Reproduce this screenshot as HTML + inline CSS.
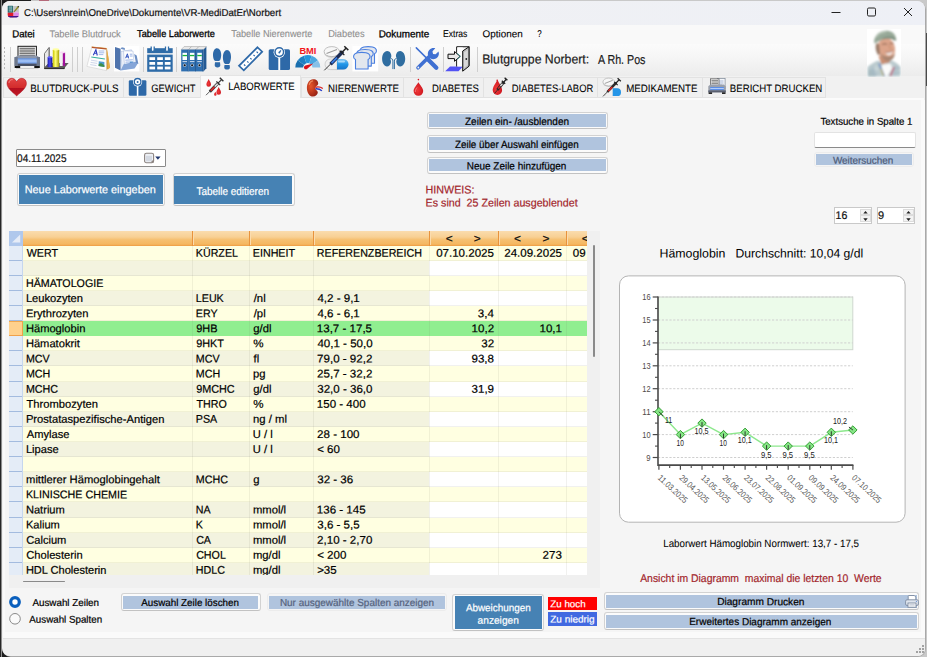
<!DOCTYPE html>
<html lang="de"><head><meta charset="utf-8"><title>VR-MediDatEr</title>
<style>
html,body{margin:0;padding:0;}
body{width:927px;height:657px;overflow:hidden;position:relative;background:#c9c9c9;font-family:"Liberation Sans",sans-serif;}
div,span,svg{position:absolute;}
span{white-space:pre;transform-origin:0 50%;-webkit-text-stroke:0.2px currentColor;}
#bgL{left:0;top:0;width:31px;height:657px;background:linear-gradient(90deg,#262626 0,#262626 1px,#8d8d8d 1px,#8d8d8d 2px,#1d1d1d 2px);}
#win{left:2px;top:1px;width:923.4px;height:654.6px;box-shadow:0.6px 0.6px 0 0.4px #a9a9a9;background:#f0f0f0;border-radius:8px;overflow:hidden;}
svg text{font-family:"Liberation Sans",sans-serif;}
</style></head><body>
<div id="bgL"></div>
<div style="left:926px;top:33px;width:1px;height:53px;background:#4a4a4a;"></div>
<div style="left:39px;top:0px;width:9.5px;height:1px;background:#b4697a;"></div>
<div style="left:203px;top:656px;width:100px;height:1px;background:repeating-linear-gradient(90deg,#8a8a8a 0 2px,#c4c4c4 2px 5px);"></div>
<div id="win">
<div style="left:0px;top:0px;width:924px;height:24px;background:linear-gradient(90deg,#f1f1f2,#eef0f6);"></div>
<div style="left:0px;top:24px;width:924px;height:19px;background:#f9f9f9;"></div>
<div style="left:0px;top:43px;width:924px;height:32px;background:linear-gradient(#fbfbfb,#f6f6f6 40%,#ececec);"></div>
<div style="left:0px;top:75px;width:924px;height:23px;background:#f1f1f1;"></div>
</div>
<svg style="left:7px;top:5px" width="13" height="13.5" viewBox="0 0 15 15.5"><rect x="0.8" y="0.8" width="6.4" height="8.2" rx="0.8" fill="#2c6a70"/><path d="M2 2.5h4M2 4.5h4M2 6.5h4M3.4 1.5v6.5M5 1.5v6.5" stroke="#9fd0d0" stroke-width="0.6"/><path d="M7.6 1h6v8h-6z" fill="#c4c4c4"/><path d="M8 8.2L13.4 1.4" stroke="#8f8a22" stroke-width="1.5"/><path d="M12 1l2 .2-.3 2z" fill="#3a3a3a"/><path d="M0.8 9h6.8v5.2H3.6a2.8 2.8 0 0 1-2.8-2.8z" fill="#e01b2b"/><path d="M7.6 9h6.2v2.4a2.8 2.8 0 0 1-2.8 2.8H7.6z" fill="#dd8ee6"/><path d="M8 9c.5-2 4.500-2 5.400 0z" fill="#e7a8ee"/><path d="M1.1 12.600h12.400a2.800 2.800 0 0 1-2.500 1.700H3.600a2.800 2.800 0 0 1-2.500-1.700z" fill="#43168a"/></svg>
<span style="left:24px;top:7px;font-size:10px;line-height:10px;color:#111;transform:translate(0.01px,0.99px) rotate(.03deg) scaleX(0.9657);">C:\Users\nrein\OneDrive\Dokumente\VR-MediDatEr\Norbert</span>
<svg style="left:825px;top:2px" width="100" height="22" viewBox="825 2 100 22"><path d="M831.5 12.5h9" stroke="#222" stroke-width="1" fill="none"/><rect x="867.5" y="8" width="8" height="8" rx="1.3" fill="none" stroke="#222" stroke-width="1"/><path d="M904 8l8 8M912 8l-8 8" stroke="#222" stroke-width="1" fill="none"/></svg>
<span style="left:12px;top:29px;font-size:10px;line-height:10px;color:#000;transform:translate(0.21px,0.19px) rotate(.03deg) scaleX(0.9611);-webkit-text-stroke:0.3px #000;">Datei</span>
<span style="left:49px;top:29px;font-size:10px;line-height:10px;color:#8e8e8e;transform:translate(0.49px,0.19px) rotate(.03deg) scaleX(0.9357);-webkit-text-stroke:0.1px;">Tabelle Blutdruck</span>
<span style="left:137px;top:29px;font-size:10px;line-height:10px;color:#000;transform:translate(0.09px,0.19px) rotate(.03deg) scaleX(0.9207);-webkit-text-stroke:0.3px #000;">Tabelle Laborwerte</span>
<span style="left:231px;top:29px;font-size:10px;line-height:10px;color:#8e8e8e;transform:translate(0.29px,0.19px) rotate(.03deg) scaleX(0.9176);-webkit-text-stroke:0.1px;">Tabelle Nierenwerte</span>
<span style="left:328px;top:29px;font-size:10px;line-height:10px;color:#8e8e8e;transform:translate(0.14px,0.19px) rotate(.03deg) scaleX(0.9246);-webkit-text-stroke:0.1px;">Diabetes</span>
<span style="left:378px;top:29px;font-size:10px;line-height:10px;color:#000;transform:translate(0.69px,0.19px) rotate(.03deg) scaleX(0.9865);-webkit-text-stroke:0.3px #000;">Dokumente</span>
<span style="left:443px;top:29px;font-size:10px;line-height:10px;color:#000;transform:translate(0.10px,0.19px) rotate(.03deg) scaleX(0.8579);-webkit-text-stroke:0.1px;">Extras</span>
<span style="left:482px;top:29px;font-size:10px;line-height:10px;color:#000;transform:translate(0.53px,0.19px) rotate(.03deg) scaleX(0.9883);-webkit-text-stroke:0.1px;">Optionen</span>
<span style="left:537px;top:29px;font-size:10px;line-height:10px;color:#000;transform:translate(0.27px,0.19px) rotate(.03deg) scaleX(0.7949);-webkit-text-stroke:0.1px;">?</span>
<div style="left:3.5px;top:47px;width:1.4px;height:1.6px;background:#b8b8b8;"></div>
<div style="left:3.5px;top:51px;width:1.4px;height:1.6px;background:#b8b8b8;"></div>
<div style="left:3.5px;top:55px;width:1.4px;height:1.6px;background:#b8b8b8;"></div>
<div style="left:3.5px;top:59px;width:1.4px;height:1.6px;background:#b8b8b8;"></div>
<div style="left:3.5px;top:63px;width:1.4px;height:1.6px;background:#b8b8b8;"></div>
<div style="left:3.5px;top:67px;width:1.4px;height:1.6px;background:#b8b8b8;"></div>
<div style="left:9.5px;top:46.5px;width:1px;height:25px;background:#cfcfcf;"></div>
<div style="left:72px;top:46.5px;width:1px;height:25px;background:#cfcfcf;"></div>
<div style="left:76.5px;top:46.5px;width:1px;height:25px;background:#cfcfcf;"></div>
<div style="left:81.5px;top:46.5px;width:1px;height:25px;background:#cfcfcf;"></div>
<div style="left:142.5px;top:46.5px;width:1px;height:25px;background:#cfcfcf;"></div>
<div style="left:176.1px;top:46.5px;width:1px;height:25px;background:#cfcfcf;"></div>
<div style="left:410px;top:46.5px;width:1px;height:25px;background:#cfcfcf;"></div>
<div style="left:443.2px;top:46.5px;width:1px;height:25px;background:#cfcfcf;"></div>
<div style="left:477px;top:46.5px;width:1px;height:25px;background:#cfcfcf;"></div>
<svg style="left:0;top:43px" width="927" height="33" viewBox="0 43 927 33">
<defs><linearGradient id="gpb" x1="0" y1="0" x2="0" y2="1"><stop offset="0" stop-color="#5f8fe0"/><stop offset=".5" stop-color="#a9c8f8"/><stop offset="1" stop-color="#5f8fe0"/></linearGradient><linearGradient id="gyl" x1="0" y1="0" x2="1" y2="0"><stop offset="0" stop-color="#c9c400"/><stop offset=".45" stop-color="#ffff7a"/><stop offset="1" stop-color="#a8a000"/></linearGradient><linearGradient id="gbl" x1="0" y1="0" x2="1" y2="0"><stop offset="0" stop-color="#1b1bb0"/><stop offset=".5" stop-color="#4a4af0"/><stop offset="1" stop-color="#101080"/></linearGradient><linearGradient id="gcap" x1="0" y1="0" x2="0" y2="1"><stop offset="0" stop-color="#7cc4f4"/><stop offset=".5" stop-color="#2196e8"/><stop offset="1" stop-color="#1873c8"/></linearGradient></defs>
<g>
<rect x="18" y="46.300" width="18.400" height="10.500" fill="#f4f4f4" stroke="#1a1a1a" stroke-width="1"/>
<path d="M19.500 48.3h15.400" stroke="#5a5a5a" stroke-width="1"/>
<path d="M19.500 50.1h15.400" stroke="#5a5a5a" stroke-width="1"/>
<path d="M19.500 51.9h15.400" stroke="#5a5a5a" stroke-width="1"/>
<path d="M19.500 53.7h15.400" stroke="#5a5a5a" stroke-width="1"/>
<path d="M19.500 55.4h15.400" stroke="#5a5a5a" stroke-width="1"/>
<path d="M14.500 57.500l3.500-2h18.400l3.500 2v8.500h-25.400z" fill="#8d97ab"/>
<rect x="14.500" y="57" width="3.300" height="9" fill="#6e788c"/><rect x="36.700" y="57" width="3.300" height="9" fill="#6e788c"/>
<rect x="17.800" y="58.300" width="18.900" height="5.400" fill="url(#gpb)"/>
<rect x="17.800" y="63.700" width="18.900" height="2.300" fill="#4a5266"/>
<rect x="14.700" y="66" width="5.500" height="2" fill="#111"/><rect x="34.300" y="66" width="5.500" height="2" fill="#111"/>
<rect x="16" y="68" width="22.500" height="1" fill="#bdbdbd" opacity=".7"/>
</g>
<g>
<path d="M44.500 53.500L49 47.500v15.500l-4.500 5.500z" fill="#e9e9e9" stroke="#555" stroke-width="0.8"/>
<path d="M49 47.500h0.800v15H49z" fill="#777"/>
<path d="M44.300 67.500l4.500-4.500h19.800l-4.500 5.500H44.300z" fill="#5c5c5c"/>
<path d="M44.300 68.600h20l0-1" stroke="#222" stroke-width="1" fill="none"/>
<rect x="47.600" y="57.200" width="4.800" height="10" fill="url(#gbl)"/><ellipse cx="50" cy="57.200" rx="2.400" ry="0.900" fill="#5a5aff"/>
<rect x="52.800" y="49.300" width="6.400" height="17.600" rx="1" fill="url(#gyl)"/><ellipse cx="56" cy="49.400" rx="3.200" ry="1.100" fill="#ffffa0"/>
<rect x="59.800" y="52.400" width="3" height="13.600" fill="#f2f2f2"/><rect x="62.800" y="52.400" width="2.300" height="13.600" fill="#a0109a"/><ellipse cx="62.400" cy="52.400" rx="2.600" ry="0.900" fill="#f7d7f5"/>
</g>
<g>
<path d="M91.500 46.600l15.200 1.500 3.300 19.500-4 2.600z" fill="#d9962e"/>
<path d="M107 48l3 19.700-2.200 1.800z" fill="#e8b04a"/>
<path d="M91.800 47.300l14.400 1.600 0.300 21.700-19.600-4.200z" fill="#fdfdfd" stroke="#c9c9c9" stroke-width="0.500"/>
<path d="M91.800 47.300l14.400 1.600" stroke="#b8552a" stroke-width="1.200"/>
<path d="M93.300 55.200l2.600-5.600 1.400 5.900M93.900 53.300h3.200" stroke="#2c3fc0" stroke-width="1.100" fill="none"/>
<path d="M98.800 51h5.500M98.800 52.800h5.500M98.800 54.600h4.500" stroke="#9bb4e8" stroke-width="0.900"/>
<path d="M91.300 57l13.600 2" stroke="#35b09a" stroke-width="1.200"/>
<path d="M91 60.200l6.500 1M90.600 62.400l6.500 1M90.200 64.600l6.300 1" stroke="#c3cde6" stroke-width="0.800"/>
<path d="M98.800 61.200l5.600 0.900 0 4.800-5.800-1z" fill="#4d9ad0"/><path d="M98.700 64.300l2.300-1.200 3.400 2.200v1.600l-5.800-1z" fill="#3f8f4a"/>
</g>
<g>
<rect x="114" y="46" width="25.400" height="25.400" fill="#fff"/>
<path d="M115 47l5.600 1.700V70.600L115 67.800z" fill="#4f74ad"/>
<path d="M120.600 48.700l1.200-1.500 3 .7v2z" fill="#6d8fc4"/>
<path d="M121 51.500l10.500-1.700 2 17.700-11.500 2z" fill="#eef2fa" stroke="#9fb3d8" stroke-width="0.500"/>
<path d="M123.500 50.800l9.500 0.300 1.500 16.500-9.800 1.300z" fill="#ffffff" stroke="#9fb3d8" stroke-width="0.500"/>
<path d="M125.600 58.200l1.800-4.400 1.200 4.600M126 56.800h2.500" stroke="#3355c0" stroke-width="1" fill="none"/>
<path d="M129.800 54.200h2.600M129.900 56h2.700M125.400 60.200l7.400-.4M125.500 62.200l4-.2" stroke="#7f9fe0" stroke-width="0.800"/>
<path d="M129.600 61.600l3.600-.2.300 3.600-3.700.3z" fill="#4d8fd0"/>
<path d="M120.600 70.600l3.200-6.500 12-2.300 2.400 1-3.600 5.800z" fill="#86a6d8"/>
<path d="M134.200 54l2.500 1.500 1.700 8.400-2.500-1.200z" fill="#6d8fc4"/>
</g>
<g>
<rect x="147.200" y="48.200" width="25.500" height="5" fill="#2e6ca8"/>
<rect x="147.200" y="54.600" width="25.500" height="17.200" fill="#2e6ca8"/>
<path d="M151.2 46.400v3.600a1.500 1.500 0 0 0 3 0v-3.600" fill="#fff" stroke="#2e6ca8" stroke-width="1.300"/>
<path d="M165.5 46.400v3.600a1.500 1.500 0 0 0 3 0v-3.600" fill="#fff" stroke="#2e6ca8" stroke-width="1.300"/>
<rect x="149.4" y="57.2" width="5.700" height="2.800" fill="#fff"/>
<rect x="149.4" y="62" width="5.700" height="2.800" fill="#fff"/>
<rect x="149.4" y="66.6" width="5.700" height="2.800" fill="#fff"/>
<rect x="157.2" y="57.2" width="5.700" height="2.800" fill="#fff"/>
<rect x="157.2" y="62" width="5.700" height="2.800" fill="#fff"/>
<rect x="157.2" y="66.6" width="5.700" height="2.800" fill="#fff"/>
<rect x="164.8" y="57.2" width="5.700" height="2.800" fill="#fff"/>
<rect x="164.8" y="62" width="5.700" height="2.800" fill="#fff"/>
<rect x="164.8" y="66.6" width="5.700" height="2.800" fill="#fff"/>
</g>
<g>
<path d="M203.400 49.600l3-3v21.600l-3 3.200z" fill="#245a94"/>
<path d="M181.2 49.600l3-3.100h7.300l-3 3.100z" fill="#e8e8e8" stroke="#8a8a8a" stroke-width="0.400"/>
<rect x="181.2" y="49.600" width="7.300" height="21.800" fill="#2f6fb0"/>
<rect x="187.8" y="49.600" width="0.700" height="21.800" fill="#1f4d80"/>
<rect x="182.5" y="52.800" width="4.500" height="7.200" fill="#fff"/>
<rect x="182.5" y="54.900" width="4.500" height="1.300" fill="#17b53a"/>
<rect x="182.5" y="61.200" width="4.500" height="0.900" fill="#dfe8f4"/>
<circle cx="184.7" cy="65.200" r="1.600" fill="#c9d6e8"/><circle cx="184.7" cy="65.200" r="1.050" fill="#111"/>
<path d="M188.6 49.600l3-3.100h7.300l-3 3.100z" fill="#e8e8e8" stroke="#8a8a8a" stroke-width="0.400"/>
<rect x="188.6" y="49.600" width="7.300" height="21.800" fill="#2f6fb0"/>
<rect x="195.20000000000002" y="49.600" width="0.700" height="21.800" fill="#1f4d80"/>
<rect x="189.9" y="52.800" width="4.500" height="7.200" fill="#fff"/>
<rect x="189.9" y="54.900" width="4.500" height="1.300" fill="#17b53a"/>
<rect x="189.9" y="61.200" width="4.500" height="0.900" fill="#dfe8f4"/>
<circle cx="192.1" cy="65.200" r="1.600" fill="#c9d6e8"/><circle cx="192.1" cy="65.200" r="1.050" fill="#111"/>
<path d="M196 49.600l3-3.100h7.300l-3 3.100z" fill="#e8e8e8" stroke="#8a8a8a" stroke-width="0.400"/>
<rect x="196" y="49.600" width="7.300" height="21.800" fill="#2f6fb0"/>
<rect x="202.60000000000002" y="49.600" width="0.700" height="21.800" fill="#1f4d80"/>
<rect x="197.3" y="52.800" width="4.500" height="7.200" fill="#fff"/>
<rect x="197.3" y="54.900" width="4.500" height="1.300" fill="#17b53a"/>
<rect x="197.3" y="61.200" width="4.500" height="0.900" fill="#dfe8f4"/>
<circle cx="199.5" cy="65.200" r="1.600" fill="#c9d6e8"/><circle cx="199.5" cy="65.200" r="1.050" fill="#111"/>
</g>
<g>
<path d="M217 48.200c2.600 0 4.300 3 4.200 6.800-.1 3-1 6-2.400 6h-3.300c-1.500 0-2.600-3.500-2.500-6.500.100-3.600 1.700-6.300 4-6.300z" fill="#2e69a8"/>
<path d="M215 62.300h5l.3 2.600c.2 1.600-1 2.500-2.800 2.500s-2.900-1-2.800-2.500z" fill="#2e69a8"/>
<path d="M227 49.900c2.500 0 4.100 3 4 7.200-.1 3.100-1 6.800-2.300 6.800h-3.300c-1.400 0-2.600-3.800-2.500-7 .1-4 1.800-7 4.100-7z" fill="#2e69a8"/>
<path d="M224.500 65h5.100l.3 2.300c.2 1.500-1 2.300-2.800 2.300s-3-.9-2.900-2.300z" fill="#2e69a8"/>
</g>
<g>
<path d="M257.500 47.300l4.700 4.400L243.800 70.300l-4.800-4.500z" fill="#fff" stroke="#2e69a8" stroke-width="1.700" stroke-linejoin="miter"/>
<path d="M245.3 65.8l-1.300-1.300" stroke="#2e69a8" stroke-width="1.200"/>
<path d="M248.5 62.6l-1.300-1.300" stroke="#2e69a8" stroke-width="1.200"/>
<path d="M251.6 59.4l-1.300-1.300" stroke="#2e69a8" stroke-width="1.200"/>
<path d="M254.8 56.2l-1.300-1.300" stroke="#2e69a8" stroke-width="1.200"/>
<path d="M257.9 53.0l-1.300-1.300" stroke="#2e69a8" stroke-width="1.200"/>
</g>
<g>
<rect x="268.700" y="49.200" width="21.300" height="20.800" rx="1.600" fill="#2e69a8"/>
<rect x="278.300" y="56" width="1.900" height="14.200" fill="#fff"/>
<circle cx="279.300" cy="52.300" r="5.700" fill="#fff"/>
<circle cx="279.300" cy="52.100" r="4.300" fill="#fff" stroke="#2e69a8" stroke-width="1.500"/>
<path d="M279.300 52.600l1.600-2.200" stroke="#2e69a8" stroke-width="1.300"/><circle cx="279.300" cy="52.500" r="0.900" fill="#2e69a8"/>
</g>
<g>
<text x="307.900" y="53.900" font-size="8.300" font-weight="bold" fill="#f2161c" text-anchor="middle" textLength="17" lengthAdjust="spacingAndGlyphs">BMI</text>
<path d="M295.30 67.60A12.5 12.5 0 0 1 297.69 60.25L304.08 64.90A4.6 4.6 0 0 0 303.20 67.60Z" fill="#1a6fae"/>
<path d="M297.69 60.25A12.5 12.5 0 0 1 303.94 55.71L306.38 63.23A4.6 4.6 0 0 0 304.08 64.90Z" fill="#1f80c4"/>
<path d="M303.94 55.71A12.5 12.5 0 0 1 311.66 55.71L309.22 63.23A4.6 4.6 0 0 0 306.38 63.23Z" fill="#2596dc"/>
<path d="M311.66 55.71A12.5 12.5 0 0 1 317.91 60.25L311.52 64.90A4.6 4.6 0 0 0 309.22 63.23Z" fill="#4aa6e0"/>
<path d="M317.91 60.25A12.5 12.5 0 0 1 320.30 67.60L312.40 67.60A4.6 4.6 0 0 0 311.52 64.90Z" fill="#86c0e8"/>
<path d="M313.300 63.400l-7.900 2.200a1.900 1.900 0 1 0 1.900 3.100z" fill="#d8121c"/>
</g>
<g>
<ellipse cx="331.800" cy="52.900" rx="7.700" ry="5" fill="#cfcfcf"/>
<ellipse cx="331.800" cy="51.600" rx="7.700" ry="5" fill="#f7f7f7" stroke="#a8a8a8" stroke-width="0.700"/>
<path d="M326.500 53.600l10.500-4.200" stroke="#9a9a9a" stroke-width="1.100"/>
<rect x="325" y="59" width="23.500" height="10.600" rx="5.300" fill="#d4d4d4"/>
<path d="M330.300 59h6.800v10.600h-6.800a5.300 5.300 0 0 1 0-10.600z" fill="#f0f0f0" stroke="#b5b5b5" stroke-width="0.500"/>
<path d="M337 59h6.200a5.300 5.300 0 0 1 0 10.600H337z" fill="url(#gcap)"/>
<rect x="338" y="60.500" width="7" height="2" rx="1" fill="#bfe3fb" opacity=".8"/>
<path d="M324.300 70.300L331 63.600" stroke="#222" stroke-width="0.900"/>
<path d="M330.500 64.200L343 51.500" stroke="#1c2b55" stroke-width="3.400" stroke-linecap="butt"/>
<path d="M331.600 63L337 57.600" stroke="#3a7be0" stroke-width="1.800"/>
<path d="M342.200 52.200l4-4.200" stroke="#222" stroke-width="1.400"/>
<path d="M344.300 46.300l4 3.800" stroke="#222" stroke-width="1.500"/>
<path d="M339.800 50.700l4.600 4.400" stroke="#222" stroke-width="1.300"/>
</g>
<g>
<rect x="352.400" y="46" width="25.800" height="25.400" fill="#fff"/>
<path d="M361.9 63.2v-9.500c-2.300-.8-2.600-4 -.6-5.600 1.500-1.200 3.500-1.500 6.900-1.500s5.400.3 6.900 1.500c2 1.600 1.700 4.800-.6 5.600v9.500z" fill="#e3e7ee" stroke="#4a7fe0" stroke-width="1.100" stroke-linejoin="round"/>
<path d="M358.7 66.1v-9.500c-2.300-.8-2.600-4 -.6-5.600 1.500-1.200 3.500-1.500 6.900-1.500s5.400.3 6.900 1.500c2 1.600 1.700 4.800-.6 5.600v9.500z" fill="#e3e7ee" stroke="#4a7fe0" stroke-width="1.100" stroke-linejoin="round"/>
<path d="M355.5 69v-9.500c-2.300-.8-2.600-4 -.6-5.600 1.500-1.200 3.500-1.500 6.900-1.500s5.400.3 6.900 1.500c2 1.600 1.700 4.800-.6 5.600v9.500z" fill="#e3e7ee" stroke="#4a7fe0" stroke-width="1.100" stroke-linejoin="round"/>
</g>
<g>
<path d="M387.200 51c2.800 0 4.300 3 4.100 5.400-.1 1.300-.9 1.800-.9 2.700s.8 1.600.6 3.100c-.3 2.600-2 4.200-4 4.200-2.900 0-4.900-3.700-4.900-7.700s2-7.700 5.100-7.700z" fill="#2f6da0"/>
<path d="M400.100 51c-2.800 0-4.300 3-4.100 5.400.1 1.300.9 1.800.9 2.700s-.8 1.600-.6 3.100c.3 2.600 2 4.200 4 4.200 2.900 0 4.900-3.700 4.900-7.700s-2-7.700-5.100-7.700z" fill="#2f6da0"/>
<path d="M390.600 58.600c1.700 0 2.300.8 2.300 2.500v8M396.700 58.600c-1.700 0-2.300.8-2.300 2.500v8" stroke="#2f6da0" stroke-width="1" fill="none"/>
</g>
<g>
<path d="M416.300 47.900l9.800 9.700" stroke="#3f70d2" stroke-width="1.500" stroke-linecap="round"/>
<path d="M427.300 58.700l9 9" stroke="#3f70d2" stroke-width="4.300" stroke-linecap="round"/>
<path d="M418 67.800L431.300 54.500" stroke="#3f70d2" stroke-width="3.600" stroke-linecap="round"/>
<path d="M435.300 48.300l-2.800 2.900.4 2.700 2.700.4 2.900-2.800c.9 2.300.3 4.500-1.200 6-1.900 1.900-4.700 2.200-6.900.9l-1.800-1.800c-1.300-2.200-1-5 .9-6.900 1.500-1.500 3.700-2.100 5.800-1.400z" fill="#3f70d2"/>
<circle cx="418.300" cy="67.500" r="0.900" fill="#f3f3f3"/>
</g>
<g>
<path d="M450 66.500h13l-4.500 4.700h-13.300z" fill="#5252f4"/>
<path d="M456.700 46.800h12.200v19" fill="none" stroke="#111" stroke-width="1.100"/>
<path d="M456.700 46.800v6M456.700 59.500v7" stroke="#111" stroke-width="1.100"/>
<rect x="457.300" y="47.400" width="5.500" height="19" fill="#fff"/>
<path d="M462.700 51l6.300-4.200v19.400l-6.300 5z" fill="#bdbdbd" stroke="#111" stroke-width="1"/>
<path d="M464 52.500l3.800-2.600v15.200l-3.800 3z" fill="#d9d9d9"/>
<circle cx="466.300" cy="59" r="0.900" fill="#222"/>
<path d="M448 54.200h6.500v-2.700l5.700 4.900-5.700 4.900v-2.700H448z" fill="#e9e9e9" stroke="#111" stroke-width="1" stroke-linejoin="miter"/>
<path d="M457.200 53.200l3.200 3.100-3.200 3.100" fill="none" stroke="#2a8a8a" stroke-width="0.800"/>
</g>
</svg>
<span style="left:482px;top:52px;font-size:13px;line-height:13px;color:#1a1a1a;transform:translate(0.19px,0.53px) rotate(.03deg) scaleX(0.9425);">Blutgruppe Norbert:</span>
<span style="left:597px;top:52px;font-size:13px;line-height:13px;color:#1a1a1a;transform:translate(0.98px,0.53px) rotate(.03deg) scaleX(0.8203);">A Rh. Pos</span>
<svg style="left:867px;top:29px" width="34" height="48" viewBox="0 0 34 48">
<defs><filter id="bl" x="-10%" y="-10%" width="120%" height="120%"><feGaussianBlur stdDeviation="0.95"/></filter><clipPath id="pc"><rect x="0" y="0" width="34" height="48"/></clipPath></defs>
<rect x="0" y="0" width="34" height="48" fill="#fff"/>
<g clip-path="url(#pc)" filter="url(#bl)">
<path d="M0.500 47.500V38c3-3 7-5 10.500-6.500l6 4 6.500-4.500c4 1.500 8 4 10 7v9.500z" fill="#b9c9cd"/>
<path d="M1 47.500v-7l6 1 2 6z" fill="#a9bcc0"/>
<path d="M3 41l7 1M2 44.500l8 1M26 40l7-1M27 44l6.500-.5M5 38l3 9M29 37l-1.500 10" stroke="#9fb6c4" stroke-width="0.900" fill="none"/>
<path d="M8.500 35l3.500 6-4 1zM25.500 33.500l-2.500 6.500 4 0.500z" fill="#c9d6d8"/>
<path d="M14.500 36l9-1.500 1.500 5-5 8h-3.500z" fill="#fbfbfb"/>
<path d="M12 34.500l5.500 13" stroke="#5b7fc0" stroke-width="1.400"/><path d="M14 40l2.500 7" stroke="#d8c040" stroke-width="1"/><path d="M27 38l-3.500 9" stroke="#c05070" stroke-width="1.500"/>
<path d="M11.500 27l3 8.500 8-2 1.500-6z" fill="#c98f74"/>
<ellipse cx="19.300" cy="19.800" rx="8.800" ry="10.800" fill="#dca48a" transform="rotate(-8 19.300 19.800)"/>
<path d="M9.500 14c-1.500 3-1 8 1.500 12l2-1-1-10z" fill="#9a7a68"/>
<path d="M13.500 24c1 5 4.500 8.500 8.500 8 3.500-.5 5.500-4 6-7.500-2.500 2.500-5 3.300-8 3-3-.3-5-1.500-6.500-3.500z" fill="#a98672"/>
<path d="M18.500 23.200c3 .6 5.500 0 7.500-1.700-.3 3-2 4.800-4.200 4.700-1.700-.1-2.800-1.400-3.300-3z" fill="#f6ece6"/>
<path d="M18.500 23.200c3 .6 5.500 0 7.500-1.700" stroke="#8a4a40" stroke-width="0.700" fill="none"/>
<path d="M15 15.500c2-1 3.500-1 5 0M22.500 14.800c1.500-.8 3-.8 4 0" stroke="#7a5545" stroke-width="1" fill="none"/>
<path d="M22 16c.8 2 .9 3.500 1.800 4.500" stroke="#c48868" stroke-width="1" fill="none"/>
<path d="M7.300 14.500c-1-6 3-11.500 10-12.500 6-.8 10.500 2 11.500 6.500.3 1.300-.2 2.500-.8 3.300-3-2.800-8-3-12.500-1.200-3 1.200-5.500 2.600-8.200 3.900z" fill="#96a897"/>
<path d="M9 8.500c2-3.500 6-5.500 10-5.600" stroke="#b3c2b3" stroke-width="1.500" fill="none"/>
<path d="M15.500 10.600c4.500-1.800 9.500-1.600 12.500 1.200l1.500-1.300c-2.500-3.500-9-3.800-14-1.300z" fill="#7b8d7d"/>
</g></svg>
<div style="left:3px;top:77px;width:120.7px;height:21px;background:#f0f0f0;border:1px solid #e2e2e2;box-sizing:border-box;"></div>
<span style="left:30px;top:82px;font-size:10.8px;line-height:10.8px;color:#000;transform:translate(0.20px,0.55px) rotate(.03deg) scaleX(0.9022);-webkit-text-stroke:0.08px;">BLUTDRUCK-PULS</span>
<div style="left:122.7px;top:77px;width:77.9px;height:21px;background:#f0f0f0;border:1px solid #e2e2e2;box-sizing:border-box;"></div>
<span style="left:151px;top:82px;font-size:10.8px;line-height:10.8px;color:#000;transform:translate(0.23px,0.55px) rotate(.03deg) scaleX(0.8685);-webkit-text-stroke:0.08px;">GEWICHT</span>
<div style="left:199.6px;top:75px;width:101.3px;height:24px;background:#fafafa;border:1px solid #e4e4e4;border-bottom:none;box-sizing:border-box;"></div>
<span style="left:228px;top:81px;font-size:10.8px;line-height:10.8px;color:#000;transform:translate(0.22px,0.15px) rotate(.03deg) scaleX(0.8834);-webkit-text-stroke:0.08px;">LABORWERTE</span>
<div style="left:300.9px;top:77px;width:103.1px;height:21px;background:#f0f0f0;border:1px solid #e2e2e2;box-sizing:border-box;"></div>
<span style="left:328px;top:82px;font-size:10.8px;line-height:10.8px;color:#000;transform:translate(0.11px,0.55px) rotate(.03deg) scaleX(0.8910);-webkit-text-stroke:0.08px;">NIERENWERTE</span>
<div style="left:403px;top:77px;width:80.7px;height:21px;background:#f0f0f0;border:1px solid #e2e2e2;box-sizing:border-box;"></div>
<span style="left:432px;top:82px;font-size:10.8px;line-height:10.8px;color:#000;transform:translate(0.02px,0.55px) rotate(.03deg) scaleX(0.8764);-webkit-text-stroke:0.08px;">DIABETES</span>
<div style="left:482.7px;top:77px;width:115.6px;height:21px;background:#f0f0f0;border:1px solid #e2e2e2;box-sizing:border-box;"></div>
<span style="left:511px;top:82px;font-size:10.8px;line-height:10.8px;color:#000;transform:translate(0.83px,0.55px) rotate(.03deg) scaleX(0.8695);-webkit-text-stroke:0.08px;">DIABETES-LABOR</span>
<div style="left:597.3px;top:77px;width:105.7px;height:21px;background:#f0f0f0;border:1px solid #e2e2e2;box-sizing:border-box;"></div>
<span style="left:626px;top:82px;font-size:10.8px;line-height:10.8px;color:#000;transform:translate(0.20px,0.55px) rotate(.03deg) scaleX(0.8991);-webkit-text-stroke:0.08px;">MEDIKAMENTE</span>
<div style="left:702px;top:77px;width:123.6px;height:21px;background:#f0f0f0;border:1px solid #e2e2e2;box-sizing:border-box;"></div>
<span style="left:729px;top:82px;font-size:10.8px;line-height:10.8px;color:#000;transform:translate(0.81px,0.55px) rotate(.03deg) scaleX(0.8928);-webkit-text-stroke:0.08px;">BERICHT DRUCKEN</span>
<svg style="left:0;top:74px" width="927" height="26" viewBox="0 74 927 26">
<defs><linearGradient id="ghe" x1="0" y1="0" x2="0" y2="1"><stop offset="0" stop-color="#e24545"/><stop offset=".55" stop-color="#d22b2b"/><stop offset=".56" stop-color="#b30f1f"/><stop offset="1" stop-color="#c21a26"/></linearGradient><radialGradient id="gdr" cx=".4" cy=".6" r=".7"><stop offset="0" stop-color="#f03a3a"/><stop offset="1" stop-color="#c8101a"/></radialGradient><radialGradient id="gki" cx=".35" cy=".4" r=".8"><stop offset="0" stop-color="#e8552a"/><stop offset="1" stop-color="#8a1a10"/></radialGradient></defs>
<path d="M16.700 81.800c1.300-2.600 3.300-3.600 5.200-3.500 2.700.1 4.600 2.300 4.500 5.300-.1 4.600-5.300 8.400-9.700 12.300C12.300 92 7.100 88.200 7 83.600c-.1-3 1.800-5.200 4.500-5.300 1.900-.1 3.900.9 5.200 3.500z" fill="url(#ghe)" stroke="#a80d1a" stroke-width="0.500"/>
<path d="M9 82.500c.3-2 1.700-3 3.200-2.900" stroke="#f08a8a" stroke-width="1" fill="none" stroke-linecap="round"/>
<rect x="128.800" y="80.300" width="17.600" height="15.500" rx="1.300" fill="#2e69a8"/>
<rect x="136.800" y="85" width="1.600" height="11" fill="#fff"/>
<circle cx="137.600" cy="82" r="4.600" fill="#fff"/>
<circle cx="137.600" cy="81.800" r="3.300" fill="#fff" stroke="#2e69a8" stroke-width="1.300"/><circle cx="137.600" cy="81.900" r="1" fill="#2e69a8"/>
<path d="M208.7 79.11000000000001c0.8049999999999999 2.07 2.3 3.4499999999999997 2.3 5.289999999999999a2.3 2.3 0 0 1 -4.6 0c0 -1.8399999999999999 1.4949999999999999 -3.2199999999999998 2.3 -5.289999999999999z" fill="url(#gdr)"/>
<path d="M218.7 87.11000000000001c0.8049999999999999 2.07 2.3 3.4499999999999997 2.3 5.289999999999999a2.3 2.3 0 0 1 -4.6 0c0 -1.8399999999999999 1.4949999999999999 -3.2199999999999998 2.3 -5.289999999999999z" fill="url(#gdr)"/>
<path d="M215.3 91.83999999999999c0.42 1.08 1.2 1.7999999999999998 1.2 2.76a1.2 1.2 0 0 1 -2.4 0c0 -0.96 0.78 -1.68 1.2 -2.76z" fill="url(#gdr)"/>
<path d="M206 95.200l4.200-4.200" stroke="#333" stroke-width="0.800"/>
<path d="M209.800 91.600l8.700-8.800" stroke="#3b3b3b" stroke-width="3" />
<path d="M210.800 90.600l3.700-3.700" stroke="#e02525" stroke-width="1.700"/>
<path d="M214.800 86.600l3-3" stroke="#d9d9d9" stroke-width="1.500"/>
<path d="M218 83.200l3.400-3.400" stroke="#333" stroke-width="1.200"/>
<path d="M219.800 77.800l3.600 3.500" stroke="#333" stroke-width="1.400"/>
<path d="M216.400 81.400l3.800 3.700" stroke="#333" stroke-width="1.200"/>
<path d="M313 79.2C316.2 79 318.4 81.2 318.2 83.8C318.1 85.6 315.5 86.2 315.3 87.9C315.1 89.6 317.9 90.4 317.8 92.6C317.7 95 315.5 96.5 313 96.5C309.5 96.5 306.9 92.7 306.9 87.9C306.9 83.1 309.5 79.4 313 79.2Z" fill="url(#gki)"/>
<path d="M309.3 84.5c.5-2 1.800-3.300 3.400-3.600" stroke="#f59a6a" stroke-width="1.100" fill="none" stroke-linecap="round" opacity=".8"/>
<path d="M315.4 87.300c2.700-.7 5.300-.3 7.400 1.200" stroke="#d81c1c" stroke-width="1.300" fill="none"/>
<path d="M315.4 88.800c2.700-.2 4.900.5 6.500 2.100" stroke="#2438c8" stroke-width="1.300" fill="none"/>
<circle cx="418.400" cy="79.600" r="0.800" fill="#d8121c"/>
<path d="M418.4 82.2C419.8 85 423.2 87.6 423.2 91A4.8 4.8 0 0 1 413.6 91C413.6 87.6 417 85 418.4 82.2Z" fill="url(#gdr)"/>
<path d="M415.300 91.500c0-1.500.8-2.600 1.500-3.600" stroke="#f58a8a" stroke-width="0.900" fill="none" stroke-linecap="round"/>
<circle cx="497.100" cy="80.300" r="0.700" fill="#d8121c"/>
<path d="M497.4 79.39c1.645 4.23 4.7 7.050000000000001 4.7 10.809999999999999a4.7 4.7 0 0 1 -9.4 0c0 -3.7600000000000002 3.055 -6.58 4.7 -10.809999999999999z" fill="url(#gdr)"/>
<path d="M494.600 93.400l3.600-4.200" stroke="#222" stroke-width="0.800"/>
<path d="M497.300 89.800l6.600-7.800" stroke="#2a2a2a" stroke-width="2.800"/>
<path d="M500.400 86l2-2.300" stroke="#e8e8e8" stroke-width="1.300"/>
<path d="M498.300 88.600l1.800-2.100" stroke="#e02525" stroke-width="1.400"/>
<path d="M503.600 82.300l2.800-3.300" stroke="#222" stroke-width="1.300"/>
<path d="M504.600 77.800l2.800 2.500" stroke="#222" stroke-width="1.400"/>
<path d="M501.800 80.700l3.400 3" stroke="#222" stroke-width="1.200"/>
<ellipse cx="608.700" cy="83" rx="5.800" ry="3.900" fill="#c9c9c9"/>
<ellipse cx="608.700" cy="82" rx="5.800" ry="3.900" fill="#f7f7f7" stroke="#a5a5a5" stroke-width="0.600"/>
<path d="M604.700 83.500l8-3.200" stroke="#9a9a9a" stroke-width="0.900"/>
<rect x="604" y="88.300" width="17" height="7.800" rx="3.900" fill="#d2d2d2"/>
<path d="M612.500 88.300h4.600a3.900 3.900 0 0 1 0 7.800h-4.600z" fill="#2596e8"/>
<path d="M607.900 88.300h4.600v7.800h-4.600a3.900 3.900 0 0 1 0-7.800z" fill="#efefef"/>
<path d="M603 96.400l4.600-4.700" stroke="#222" stroke-width="0.800"/>
<path d="M607.300 92l9-9.300" stroke="#2a2a2a" stroke-width="2.500"/>
<path d="M608.300 91l4-4.100" stroke="#e02525" stroke-width="1.500"/>
<path d="M616 83l3-3.100" stroke="#222" stroke-width="1.200"/>
<path d="M617.600 78.300l3.200 3" stroke="#222" stroke-width="1.300"/>
<path d="M614.200 81.800l3.500 3.300" stroke="#222" stroke-width="1.100"/>
<rect x="717.300" y="78.500" width="7.800" height="10.500" fill="#f4f6fa" stroke="#7a8594" stroke-width="0.700"/>
<path d="M719 81h4.500M719 83h4.500M719 85h3" stroke="#8aa0c8" stroke-width="0.700"/>
<rect x="710.500" y="78.800" width="8.500" height="6.500" fill="#ededed" stroke="#555" stroke-width="0.700"/>
<path d="M711.500 80.400h6.500M711.500 82h6.500M711.500 83.600h6.500" stroke="#6a6a6a" stroke-width="0.800"/>
<path d="M708.300 86.200l2-1.600h13.500l2 1.600v6h-17.500z" fill="#9aa0ac"/>
<rect x="710.300" y="87" width="13.500" height="3.200" fill="#5c8fe8"/><rect x="710.300" y="88" width="13.500" height="1" fill="#b3cdf8"/>
<rect x="708.300" y="90.400" width="17.500" height="2" fill="#5a6070"/>
<rect x="708.600" y="92.400" width="3.500" height="1.500" fill="#111"/><rect x="722" y="92.400" width="3.500" height="1.500" fill="#111"/>
</svg>
<div style="left:3px;top:98px;width:921px;height:2px;background:#fbfbfb;"></div>
<div style="left:5px;top:100px;width:916px;height:532px;background:#f5f5f5;"></div>
<div style="left:3px;top:100px;width:2px;height:536px;background:#fafafa;"></div>
<div style="left:921px;top:100px;width:4px;height:536px;background:#fafafa;"></div>
<div style="left:3px;top:632px;width:922px;height:6px;background:#fafafa;"></div>
<div style="left:3px;top:638px;width:922px;height:1px;background:#e3e3e3;"></div>
<div style="left:3px;top:639px;width:922px;height:17px;background:#f0f0f0;border-radius:0 0 7px 7px;"></div>
<div style="left:922.2px;top:651.2px;width:1.4px;height:1.4px;background:#a2a2a2;"></div>
<div style="left:919.2px;top:651.2px;width:1.4px;height:1.4px;background:#a2a2a2;"></div>
<div style="left:916.2px;top:651.2px;width:1.4px;height:1.4px;background:#a2a2a2;"></div>
<div style="left:922.2px;top:648.2px;width:1.4px;height:1.4px;background:#a2a2a2;"></div>
<div style="left:919.2px;top:648.2px;width:1.4px;height:1.4px;background:#a2a2a2;"></div>
<div style="left:922.2px;top:645.2px;width:1.4px;height:1.4px;background:#a2a2a2;"></div>
<div style="left:16px;top:149px;width:150px;height:18px;background:#fff;border:1px solid #8a8a8a;box-sizing:border-box;border-radius:1px;"></div>
<span style="left:17px;top:153px;font-size:11px;line-height:11px;color:#111;transform:translate(0.11px,0.24px) rotate(.03deg) scaleX(0.9102);">04.11.2025</span>
<svg style="left:143px;top:152px" width="20" height="12" viewBox="0 0 20 12"><rect x="1.6" y="1.200" width="9" height="9.500" rx="1.800" fill="#eef1f6" stroke="#8b8380" stroke-width="1.100"/><rect x="3" y="3.800" width="6" height="5.500" fill="#d4d9e2"/><path d="M7.500 10.500l3-3v3z" fill="#8b8380"/><path d="M12.2 4.4h5.400l-2.700 3.300z" fill="#22386e"/></svg>
<div style="left:17px;top:172.6px;width:148.3px;height:33.8px;background:#fbfbfb;border:1px solid #d2d2d2;border-bottom-color:#c2c2c2;box-sizing:border-box;border-radius:3px;"></div>
<div style="left:19.2px;top:175.2px;width:143.8px;height:29px;background:#4682b4;"></div>
<span style="left:24px;top:184px;font-size:11.2px;line-height:11.2px;color:#fff;transform:translate(0.71px,0.24px) rotate(.03deg) scaleX(0.9710);">Neue Laborwerte eingeben</span>
<div style="left:172.5px;top:173.4px;width:122.3px;height:33px;background:#fbfbfb;border:1px solid #d2d2d2;border-bottom-color:#c2c2c2;box-sizing:border-box;border-radius:3px;"></div>
<div style="left:174.3px;top:176px;width:118.1px;height:28.2px;background:#4682b4;"></div>
<span style="left:196px;top:185px;font-size:11.2px;line-height:11.2px;color:#fff;transform:translate(0.48px,0.64px) rotate(.03deg) scaleX(0.8897);">Tabelle editieren</span>
<div style="left:427px;top:111.8px;width:181px;height:17.7px;background:#fbfbfb;border:1px solid #d2d2d2;border-bottom-color:#c2c2c2;box-sizing:border-box;border-radius:3px;"></div>
<div style="left:429px;top:114px;width:177px;height:13px;background:#b0c4de;"></div>
<span style="left:464px;top:115px;font-size:10.5px;line-height:10.5px;color:#000;transform:translate(0.98px,0.94px) rotate(.03deg) scaleX(0.9534);">Zeilen ein- /ausblenden</span>
<div style="left:427px;top:135px;width:181px;height:17.6px;background:#fbfbfb;border:1px solid #d2d2d2;border-bottom-color:#c2c2c2;box-sizing:border-box;border-radius:3px;"></div>
<div style="left:429px;top:137.2px;width:177px;height:12.7px;background:#b0c4de;"></div>
<span style="left:454px;top:138px;font-size:10.5px;line-height:10.5px;color:#000;transform:translate(0.99px,0.94px) rotate(.03deg) scaleX(0.9377);">Zeile über Auswahl einfügen</span>
<div style="left:427px;top:156.7px;width:181px;height:17.3px;background:#fbfbfb;border:1px solid #d2d2d2;border-bottom-color:#c2c2c2;box-sizing:border-box;border-radius:3px;"></div>
<div style="left:429px;top:158.7px;width:177px;height:12.7px;background:#b0c4de;"></div>
<span style="left:466px;top:160px;font-size:10.5px;line-height:10.5px;color:#000;transform:translate(0.78px,0.54px) rotate(.03deg) scaleX(0.9476);">Neue Zeile hinzufügen</span>
<span style="left:425px;top:184px;font-size:11.2px;line-height:11.2px;color:#a3262c;transform:translate(0.62px,0.54px) rotate(.03deg) scaleX(0.9576);">HINWEIS:</span>
<span style="left:425px;top:197px;font-size:11.2px;line-height:11.2px;color:#a3262c;transform:translate(0.62px,0.54px) rotate(.03deg) scaleX(0.9546);">Es sind  25 Zeilen ausgeblendet</span>
<span style="left:820px;top:116px;font-size:10px;line-height:10px;color:#000;transform:translate(0.38px,0.79px) rotate(.03deg) scaleX(0.9680);">Textsuche in Spalte 1</span>
<div style="left:813.6px;top:131.7px;width:102px;height:16px;background:#fff;border:1px solid #e3e3e3;border-bottom:1px solid #8a8a8a;box-sizing:border-box;border-radius:2px;"></div>
<div style="left:816px;top:153.9px;width:96px;height:11.1px;background:#b0c4de;"></div>
<div style="left:813.6px;top:151.5px;width:100.4px;height:15.8px;background:transparent;border:1px solid #ececec;box-sizing:border-box;border-radius:3px;"></div>
<span style="left:832px;top:155px;font-size:10px;line-height:10px;color:#4d5b78;transform:translate(0.96px,0.79px) rotate(.03deg) scaleX(0.9893);">Weitersuchen</span>
<div style="left:834px;top:207px;width:38px;height:17px;background:#fff;border:1px solid #c9c9c9;box-sizing:border-box;"></div>
<span style="left:835px;top:210px;font-size:11px;line-height:11px;color:#111;transform:translate(0.59px,0.04px) rotate(.03deg) scaleX(0.9621);">16</span>
<div style="left:859.5px;top:208.5px;width:11px;height:6.6px;background:#f3f3f3;border:1px solid #dcdcdc;box-sizing:border-box;"></div>
<div style="left:859.5px;top:215.4px;width:11px;height:6.6px;background:#f3f3f3;border:1px solid #dcdcdc;box-sizing:border-box;"></div>
<svg style="left:859.5px;top:208.5px" width="11" height="14" viewBox="0 0 11 14"><path d="M3.3 4.6L5.5 1.9 7.7 4.6z" fill="#222"/><path d="M3.3 9.2L5.5 11.9 7.7 9.2z" fill="#222"/></svg>
<div style="left:876.6px;top:207px;width:38.4px;height:17px;background:#fff;border:1px solid #c9c9c9;box-sizing:border-box;"></div>
<span style="left:877px;top:210px;font-size:11px;line-height:11px;color:#111;transform:translate(0.98px,0.04px) rotate(.03deg) scaleX(1.0000);">9</span>
<div style="left:902.5px;top:208.5px;width:11px;height:6.6px;background:#f3f3f3;border:1px solid #dcdcdc;box-sizing:border-box;"></div>
<div style="left:902.5px;top:215.4px;width:11px;height:6.6px;background:#f3f3f3;border:1px solid #dcdcdc;box-sizing:border-box;"></div>
<svg style="left:902.5px;top:208.5px" width="11" height="14" viewBox="0 0 11 14"><path d="M3.3 4.6L5.5 1.9 7.7 4.6z" fill="#222"/><path d="M3.3 9.2L5.5 11.9 7.7 9.2z" fill="#222"/></svg>
<div id="tbl" style="left:9px;top:231px;width:578px;height:344px;overflow:hidden;">
<div style="left:0px;top:0px;width:578px;height:15px;background:linear-gradient(#fadcae 0%,#f8d094 40%,#f6c071 58%,#f5b760 88%,#ee9b42 100%);"></div>
<div style="left:0px;top:0px;width:13.5px;height:15px;background:#b0c8ec;"></div>
<svg style="left:0;top:0" width="14" height="15" viewBox="0 0 14 15"><path d="M3 11.600h8.200v-8.200z" fill="#e6ecf7"/></svg>
<div style="left:182.8px;top:0px;width:1px;height:15px;background:#e8933d;"></div>
<div style="left:183.8px;top:0px;width:1px;height:14px;background:#fbdcae;"></div>
<div style="left:240.3px;top:0px;width:1px;height:15px;background:#e8933d;"></div>
<div style="left:241.3px;top:0px;width:1px;height:14px;background:#fbdcae;"></div>
<div style="left:304px;top:0px;width:1px;height:15px;background:#e8933d;"></div>
<div style="left:305px;top:0px;width:1px;height:14px;background:#fbdcae;"></div>
<div style="left:419.9px;top:0px;width:1px;height:15px;background:#e8933d;"></div>
<div style="left:420.9px;top:0px;width:1px;height:14px;background:#fbdcae;"></div>
<div style="left:488.8px;top:0px;width:1px;height:15px;background:#e8933d;"></div>
<div style="left:489.8px;top:0px;width:1px;height:14px;background:#fbdcae;"></div>
<div style="left:557.2px;top:0px;width:1px;height:15px;background:#e8933d;"></div>
<div style="left:558.2px;top:0px;width:1px;height:14px;background:#fbdcae;"></div>
<div style="left:13.5px;top:15px;width:406.9px;height:15px;background:#ffffe1;"></div>
<div style="left:420.4px;top:15px;width:157.6px;height:15px;background:#ffffe1;"></div>
<div style="left:0px;top:15px;width:13.5px;height:15px;background:#e4ecf7;"></div>
<div style="left:0px;top:29px;width:13.5px;height:1px;background:#a3bbdf;"></div>
<div style="left:12.5px;top:15px;width:1px;height:15px;background:#c5d6ee;"></div>
<div style="left:13.5px;top:29px;width:564.5px;height:1px;background:rgba(120,120,100,0.10);"></div>
<span style="left:17px;top:16px;font-size:11.2px;line-height:11.2px;color:#000;transform:translate(0.75px,0.74px) rotate(.03deg) scaleX(0.9549);">WERT</span>
<span style="left:186px;top:16px;font-size:11.2px;line-height:11.2px;color:#000;transform:translate(0.82px,0.74px) rotate(.03deg) scaleX(0.9549);">KÜRZEL</span>
<span style="left:243px;top:16px;font-size:11.2px;line-height:11.2px;color:#000;transform:translate(0.82px,0.74px) rotate(.03deg) scaleX(0.9549);">EINHEIT</span>
<span style="left:307px;top:16px;font-size:11.2px;line-height:11.2px;color:#000;transform:translate(0.82px,0.74px) rotate(.03deg) scaleX(0.9549);">REFERENZBEREICH</span>
<span style="left:427px;top:16px;font-size:11.2px;line-height:11.2px;color:#000;transform:translate(0.15px,0.74px) rotate(.03deg) scaleX(1.0319);">07.10.2025</span>
<span style="left:495px;top:16px;font-size:11.2px;line-height:11.2px;color:#000;transform:translate(0.22px,0.74px) rotate(.03deg) scaleX(1.0319);">24.09.2025</span>
<span style="left:563px;top:16px;font-size:11.2px;line-height:11.2px;color:#000;transform:translate(0.75px,0.74px) rotate(.03deg) scaleX(1.0319);">09</span>
<div style="left:13.5px;top:30px;width:406.9px;height:15px;background:#f3f3df;"></div>
<div style="left:420.4px;top:30px;width:157.6px;height:15px;background:#ffffff;"></div>
<div style="left:0px;top:30px;width:13.5px;height:15px;background:#e4ecf7;"></div>
<div style="left:0px;top:44px;width:13.5px;height:1px;background:#a3bbdf;"></div>
<div style="left:12.5px;top:30px;width:1px;height:15px;background:#c5d6ee;"></div>
<div style="left:13.5px;top:44px;width:564.5px;height:1px;background:rgba(120,120,100,0.10);"></div>
<div style="left:13.5px;top:45px;width:406.9px;height:15px;background:#ffffe1;"></div>
<div style="left:420.4px;top:45px;width:157.6px;height:15px;background:#ffffe1;"></div>
<div style="left:0px;top:45px;width:13.5px;height:15px;background:#e4ecf7;"></div>
<div style="left:0px;top:59px;width:13.5px;height:1px;background:#a3bbdf;"></div>
<div style="left:12.5px;top:45px;width:1px;height:15px;background:#c5d6ee;"></div>
<div style="left:13.5px;top:59px;width:564.5px;height:1px;background:rgba(120,120,100,0.10);"></div>
<span style="left:16px;top:46px;font-size:11.2px;line-height:11.2px;color:#000;transform:translate(0.92px,0.94px) rotate(.03deg) scaleX(0.9549);">HÄMATOLOGIE</span>
<div style="left:13.5px;top:60px;width:406.9px;height:15px;background:#f3f3df;"></div>
<div style="left:420.4px;top:60px;width:157.6px;height:15px;background:#ffffff;"></div>
<div style="left:0px;top:60px;width:13.5px;height:15px;background:#e4ecf7;"></div>
<div style="left:0px;top:74px;width:13.5px;height:1px;background:#a3bbdf;"></div>
<div style="left:12.5px;top:60px;width:1px;height:15px;background:#c5d6ee;"></div>
<div style="left:13.5px;top:74px;width:564.5px;height:1px;background:rgba(120,120,100,0.10);"></div>
<span style="left:16px;top:62px;font-size:11.2px;line-height:11.2px;color:#000;transform:translate(0.88px,0.04px) rotate(.03deg) scaleX(0.9979);">Leukozyten</span>
<span style="left:186px;top:62px;font-size:11.2px;line-height:11.2px;color:#000;transform:translate(0.82px,0.04px) rotate(.03deg) scaleX(0.9549);">LEUK</span>
<span style="left:244px;top:62px;font-size:11.2px;line-height:11.2px;color:#000;transform:translate(0.70px,0.04px) rotate(.03deg) scaleX(1.0107);">/nl</span>
<span style="left:308px;top:62px;font-size:11.2px;line-height:11.2px;color:#000;transform:translate(0.43px,0.04px) rotate(.03deg) scaleX(1.0319);">4,2 - 9,1</span>
<div style="left:13.5px;top:75px;width:406.9px;height:15px;background:#ffffe1;"></div>
<div style="left:420.4px;top:75px;width:157.6px;height:15px;background:#ffffe1;"></div>
<div style="left:0px;top:75px;width:13.5px;height:15px;background:#e4ecf7;"></div>
<div style="left:0px;top:89px;width:13.5px;height:1px;background:#a3bbdf;"></div>
<div style="left:12.5px;top:75px;width:1px;height:15px;background:#c5d6ee;"></div>
<div style="left:13.5px;top:89px;width:564.5px;height:1px;background:rgba(120,120,100,0.10);"></div>
<span style="left:16px;top:77px;font-size:11.2px;line-height:11.2px;color:#000;transform:translate(0.88px,0.14px) rotate(.03deg) scaleX(0.9974);">Erythrozyten</span>
<span style="left:186px;top:77px;font-size:11.2px;line-height:11.2px;color:#000;transform:translate(0.82px,0.14px) rotate(.03deg) scaleX(0.9549);">ERY</span>
<span style="left:244px;top:77px;font-size:11.2px;line-height:11.2px;color:#000;transform:translate(0.70px,0.14px) rotate(.03deg) scaleX(1.0107);">/pl</span>
<span style="left:308px;top:77px;font-size:11.2px;line-height:11.2px;color:#000;transform:translate(0.43px,0.14px) rotate(.03deg) scaleX(1.0319);">4,6 - 6,1</span>
<span style="left:468px;top:77px;font-size:11.2px;line-height:11.2px;color:#000;transform:translate(0.77px,0.14px) rotate(.03deg) scaleX(1.0319);">3,4</span>
<div style="left:13.5px;top:90px;width:406.9px;height:15px;background:#90ee90;"></div>
<div style="left:420.4px;top:90px;width:157.6px;height:15px;background:#90ee90;"></div>
<div style="left:0px;top:90px;width:13.5px;height:15px;background:#ffd18d;border-top:1px solid #f2a84e;box-sizing:border-box;"></div>
<div style="left:0px;top:104px;width:13.5px;height:1px;background:#f0a14a;"></div>
<div style="left:12.5px;top:90px;width:1px;height:15px;background:#f0a14a;"></div>
<span style="left:16px;top:92px;font-size:11.2px;line-height:11.2px;color:#000;transform:translate(0.88px,0.24px) rotate(.03deg) scaleX(0.9966);">Hämoglobin</span>
<span style="left:187px;top:92px;font-size:11.2px;line-height:11.2px;color:#000;transform:translate(0.19px,0.24px) rotate(.03deg) scaleX(0.9769);">9HB</span>
<span style="left:244px;top:92px;font-size:11.2px;line-height:11.2px;color:#000;transform:translate(0.23px,0.24px) rotate(.03deg) scaleX(1.0081);">g/dl</span>
<span style="left:307px;top:92px;font-size:11.2px;line-height:11.2px;color:#000;transform:translate(0.82px,0.24px) rotate(.03deg) scaleX(1.0319);">13,7 - 17,5</span>
<span style="left:462px;top:92px;font-size:11.2px;line-height:11.2px;color:#000;transform:translate(0.59px,0.24px) rotate(.03deg) scaleX(1.0319);">10,2</span>
<span style="left:530px;top:92px;font-size:11.2px;line-height:11.2px;color:#000;transform:translate(0.47px,0.24px) rotate(.03deg) scaleX(1.0319);">10,1</span>
<div style="left:13.5px;top:105px;width:406.9px;height:15px;background:#ffffe1;"></div>
<div style="left:420.4px;top:105px;width:157.6px;height:15px;background:#ffffe1;"></div>
<div style="left:0px;top:105px;width:13.5px;height:15px;background:#e4ecf7;"></div>
<div style="left:0px;top:119px;width:13.5px;height:1px;background:#a3bbdf;"></div>
<div style="left:12.5px;top:105px;width:1px;height:15px;background:#c5d6ee;"></div>
<div style="left:13.5px;top:119px;width:564.5px;height:1px;background:rgba(120,120,100,0.10);"></div>
<span style="left:16px;top:107px;font-size:11.2px;line-height:11.2px;color:#000;transform:translate(0.88px,0.34px) rotate(.03deg) scaleX(0.9960);">Hämatokrit</span>
<span style="left:187px;top:107px;font-size:11.2px;line-height:11.2px;color:#000;transform:translate(0.19px,0.34px) rotate(.03deg) scaleX(0.9717);">9HKT</span>
<span style="left:244px;top:107px;font-size:11.2px;line-height:11.2px;color:#000;transform:translate(0.29px,0.34px) rotate(.03deg) scaleX(1.0319);">%</span>
<span style="left:308px;top:107px;font-size:11.2px;line-height:11.2px;color:#000;transform:translate(0.43px,0.34px) rotate(.03deg) scaleX(1.0319);">40,1 - 50,0</span>
<span style="left:472px;top:107px;font-size:11.2px;line-height:11.2px;color:#000;transform:translate(0.23px,0.34px) rotate(.03deg) scaleX(1.0319);">32</span>
<div style="left:13.5px;top:120px;width:406.9px;height:15px;background:#f3f3df;"></div>
<div style="left:420.4px;top:120px;width:157.6px;height:15px;background:#ffffff;"></div>
<div style="left:0px;top:120px;width:13.5px;height:15px;background:#e4ecf7;"></div>
<div style="left:0px;top:134px;width:13.5px;height:1px;background:#a3bbdf;"></div>
<div style="left:12.5px;top:120px;width:1px;height:15px;background:#c5d6ee;"></div>
<div style="left:13.5px;top:134px;width:564.5px;height:1px;background:rgba(120,120,100,0.10);"></div>
<span style="left:16px;top:122px;font-size:11.2px;line-height:11.2px;color:#000;transform:translate(0.92px,0.44px) rotate(.03deg) scaleX(0.9549);">MCV</span>
<span style="left:186px;top:122px;font-size:11.2px;line-height:11.2px;color:#000;transform:translate(0.82px,0.44px) rotate(.03deg) scaleX(0.9549);">MCV</span>
<span style="left:244px;top:122px;font-size:11.2px;line-height:11.2px;color:#000;transform:translate(0.54px,0.44px) rotate(.03deg) scaleX(1.0032);">fl</span>
<span style="left:308px;top:122px;font-size:11.2px;line-height:11.2px;color:#000;transform:translate(0.11px,0.44px) rotate(.03deg) scaleX(1.0319);">79,0 - 92,2</span>
<span style="left:462px;top:122px;font-size:11.2px;line-height:11.2px;color:#000;transform:translate(0.51px,0.44px) rotate(.03deg) scaleX(1.0319);">93,8</span>
<div style="left:13.5px;top:135px;width:406.9px;height:16px;background:#ffffe1;"></div>
<div style="left:420.4px;top:135px;width:157.6px;height:16px;background:#ffffe1;"></div>
<div style="left:0px;top:135px;width:13.5px;height:16px;background:#e4ecf7;"></div>
<div style="left:0px;top:150px;width:13.5px;height:1px;background:#a3bbdf;"></div>
<div style="left:12.5px;top:135px;width:1px;height:16px;background:#c5d6ee;"></div>
<div style="left:13.5px;top:150px;width:564.5px;height:1px;background:rgba(120,120,100,0.10);"></div>
<span style="left:16px;top:137px;font-size:11.2px;line-height:11.2px;color:#000;transform:translate(0.92px,0.54px) rotate(.03deg) scaleX(0.9549);">MCH</span>
<span style="left:186px;top:137px;font-size:11.2px;line-height:11.2px;color:#000;transform:translate(0.82px,0.54px) rotate(.03deg) scaleX(0.9549);">MCH</span>
<span style="left:243px;top:137px;font-size:11.2px;line-height:11.2px;color:#000;transform:translate(0.98px,0.54px) rotate(.03deg) scaleX(1.0032);">pg</span>
<span style="left:308px;top:137px;font-size:11.2px;line-height:11.2px;color:#000;transform:translate(0.12px,0.54px) rotate(.03deg) scaleX(1.0319);">25,7 - 32,2</span>
<div style="left:13.5px;top:151px;width:406.9px;height:15px;background:#f3f3df;"></div>
<div style="left:420.4px;top:151px;width:157.6px;height:15px;background:#ffffff;"></div>
<div style="left:0px;top:151px;width:13.5px;height:15px;background:#e4ecf7;"></div>
<div style="left:0px;top:165px;width:13.5px;height:1px;background:#a3bbdf;"></div>
<div style="left:12.5px;top:151px;width:1px;height:15px;background:#c5d6ee;"></div>
<div style="left:13.5px;top:165px;width:564.5px;height:1px;background:rgba(120,120,100,0.10);"></div>
<span style="left:16px;top:152px;font-size:11.2px;line-height:11.2px;color:#000;transform:translate(0.92px,0.64px) rotate(.03deg) scaleX(0.9549);">MCHC</span>
<span style="left:187px;top:152px;font-size:11.2px;line-height:11.2px;color:#000;transform:translate(0.19px,0.64px) rotate(.03deg) scaleX(0.9670);">9MCHC</span>
<span style="left:244px;top:152px;font-size:11.2px;line-height:11.2px;color:#000;transform:translate(0.23px,0.64px) rotate(.03deg) scaleX(1.0081);">g/dl</span>
<span style="left:308px;top:152px;font-size:11.2px;line-height:11.2px;color:#000;transform:translate(0.26px,0.64px) rotate(.03deg) scaleX(1.0319);">32,0 - 36,0</span>
<span style="left:462px;top:152px;font-size:11.2px;line-height:11.2px;color:#000;transform:translate(0.55px,0.64px) rotate(.03deg) scaleX(1.0319);">31,9</span>
<div style="left:13.5px;top:166px;width:406.9px;height:15px;background:#ffffe1;"></div>
<div style="left:420.4px;top:166px;width:157.6px;height:15px;background:#ffffe1;"></div>
<div style="left:0px;top:166px;width:13.5px;height:15px;background:#e4ecf7;"></div>
<div style="left:0px;top:180px;width:13.5px;height:1px;background:#a3bbdf;"></div>
<div style="left:12.5px;top:166px;width:1px;height:15px;background:#c5d6ee;"></div>
<div style="left:13.5px;top:180px;width:564.5px;height:1px;background:rgba(120,120,100,0.10);"></div>
<span style="left:17px;top:167px;font-size:11.2px;line-height:11.2px;color:#000;transform:translate(0.55px,0.74px) rotate(.03deg) scaleX(0.9986);">Thrombozyten</span>
<span style="left:187px;top:167px;font-size:11.2px;line-height:11.2px;color:#000;transform:translate(0.46px,0.74px) rotate(.03deg) scaleX(0.9549);">THRO</span>
<span style="left:244px;top:167px;font-size:11.2px;line-height:11.2px;color:#000;transform:translate(0.29px,0.74px) rotate(.03deg) scaleX(1.0319);">%</span>
<span style="left:307px;top:167px;font-size:11.2px;line-height:11.2px;color:#000;transform:translate(0.82px,0.74px) rotate(.03deg) scaleX(1.0319);">150 - 400</span>
<div style="left:13.5px;top:181px;width:406.9px;height:15px;background:#f3f3df;"></div>
<div style="left:420.4px;top:181px;width:157.6px;height:15px;background:#ffffff;"></div>
<div style="left:0px;top:181px;width:13.5px;height:15px;background:#e4ecf7;"></div>
<div style="left:0px;top:195px;width:13.5px;height:1px;background:#a3bbdf;"></div>
<div style="left:12.5px;top:181px;width:1px;height:15px;background:#c5d6ee;"></div>
<div style="left:13.5px;top:195px;width:564.5px;height:1px;background:rgba(120,120,100,0.10);"></div>
<span style="left:16px;top:182px;font-size:11.2px;line-height:11.2px;color:#000;transform:translate(0.88px,0.84px) rotate(.03deg) scaleX(0.9987);">Prostataspezifische-Antigen</span>
<span style="left:186px;top:182px;font-size:11.2px;line-height:11.2px;color:#000;transform:translate(0.82px,0.84px) rotate(.03deg) scaleX(0.9549);">PSA</span>
<span style="left:243px;top:182px;font-size:11.2px;line-height:11.2px;color:#000;transform:translate(0.95px,0.84px) rotate(.03deg) scaleX(1.0112);">ng / ml</span>
<div style="left:13.5px;top:196px;width:406.9px;height:15px;background:#ffffe1;"></div>
<div style="left:420.4px;top:196px;width:157.6px;height:15px;background:#ffffe1;"></div>
<div style="left:0px;top:196px;width:13.5px;height:15px;background:#e4ecf7;"></div>
<div style="left:0px;top:210px;width:13.5px;height:1px;background:#a3bbdf;"></div>
<div style="left:12.5px;top:196px;width:1px;height:15px;background:#c5d6ee;"></div>
<div style="left:13.5px;top:210px;width:564.5px;height:1px;background:rgba(120,120,100,0.10);"></div>
<span style="left:17px;top:197px;font-size:11.2px;line-height:11.2px;color:#000;transform:translate(0.78px,0.94px) rotate(.03deg) scaleX(0.9948);">Amylase</span>
<span style="left:243px;top:197px;font-size:11.2px;line-height:11.2px;color:#000;transform:translate(0.84px,0.94px) rotate(.03deg) scaleX(0.9970);">U / l</span>
<span style="left:308px;top:197px;font-size:11.2px;line-height:11.2px;color:#000;transform:translate(0.12px,0.94px) rotate(.03deg) scaleX(1.0319);">28 - 100</span>
<div style="left:13.5px;top:211px;width:406.9px;height:15px;background:#f3f3df;"></div>
<div style="left:420.4px;top:211px;width:157.6px;height:15px;background:#ffffff;"></div>
<div style="left:0px;top:211px;width:13.5px;height:15px;background:#e4ecf7;"></div>
<div style="left:0px;top:225px;width:13.5px;height:1px;background:#a3bbdf;"></div>
<div style="left:12.5px;top:211px;width:1px;height:15px;background:#c5d6ee;"></div>
<div style="left:13.5px;top:225px;width:564.5px;height:1px;background:rgba(120,120,100,0.10);"></div>
<span style="left:16px;top:213px;font-size:11.2px;line-height:11.2px;color:#000;transform:translate(0.89px,0.04px) rotate(.03deg) scaleX(0.9941);">Lipase</span>
<span style="left:243px;top:213px;font-size:11.2px;line-height:11.2px;color:#000;transform:translate(0.84px,0.04px) rotate(.03deg) scaleX(0.9970);">U / l</span>
<span style="left:308px;top:213px;font-size:11.2px;line-height:11.2px;color:#000;transform:translate(0.13px,0.04px) rotate(.03deg) scaleX(1.0319);">&lt; 60</span>
<div style="left:13.5px;top:226px;width:406.9px;height:15px;background:#ffffe1;"></div>
<div style="left:420.4px;top:226px;width:157.6px;height:15px;background:#ffffe1;"></div>
<div style="left:0px;top:226px;width:13.5px;height:15px;background:#e4ecf7;"></div>
<div style="left:0px;top:240px;width:13.5px;height:1px;background:#a3bbdf;"></div>
<div style="left:12.5px;top:226px;width:1px;height:15px;background:#c5d6ee;"></div>
<div style="left:13.5px;top:240px;width:564.5px;height:1px;background:rgba(120,120,100,0.10);"></div>
<div style="left:13.5px;top:241px;width:406.9px;height:15px;background:#f3f3df;"></div>
<div style="left:420.4px;top:241px;width:157.6px;height:15px;background:#ffffff;"></div>
<div style="left:0px;top:241px;width:13.5px;height:15px;background:#e4ecf7;"></div>
<div style="left:0px;top:255px;width:13.5px;height:1px;background:#a3bbdf;"></div>
<div style="left:12.5px;top:241px;width:1px;height:15px;background:#c5d6ee;"></div>
<div style="left:13.5px;top:255px;width:564.5px;height:1px;background:rgba(120,120,100,0.10);"></div>
<span style="left:17px;top:243px;font-size:11.2px;line-height:11.2px;color:#000;transform:translate(0.06px,0.24px) rotate(.03deg) scaleX(1.0009);">mittlerer Hämoglobingehalt</span>
<span style="left:186px;top:243px;font-size:11.2px;line-height:11.2px;color:#000;transform:translate(0.82px,0.24px) rotate(.03deg) scaleX(0.9549);">MCHC</span>
<span style="left:244px;top:243px;font-size:11.2px;line-height:11.2px;color:#000;transform:translate(0.23px,0.24px) rotate(.03deg) scaleX(1.0032);">g</span>
<span style="left:308px;top:243px;font-size:11.2px;line-height:11.2px;color:#000;transform:translate(0.26px,0.24px) rotate(.03deg) scaleX(1.0319);">32 - 36</span>
<div style="left:13.5px;top:256px;width:406.9px;height:15px;background:#ffffe1;"></div>
<div style="left:420.4px;top:256px;width:157.6px;height:15px;background:#ffffe1;"></div>
<div style="left:0px;top:256px;width:13.5px;height:15px;background:#e4ecf7;"></div>
<div style="left:0px;top:270px;width:13.5px;height:1px;background:#a3bbdf;"></div>
<div style="left:12.5px;top:256px;width:1px;height:15px;background:#c5d6ee;"></div>
<div style="left:13.5px;top:270px;width:564.5px;height:1px;background:rgba(120,120,100,0.10);"></div>
<span style="left:16px;top:258px;font-size:11.2px;line-height:11.2px;color:#000;transform:translate(0.92px,0.34px) rotate(.03deg) scaleX(0.9572);">KLINISCHE CHEMIE</span>
<div style="left:13.5px;top:271px;width:406.9px;height:16px;background:#f3f3df;"></div>
<div style="left:420.4px;top:271px;width:157.6px;height:16px;background:#ffffff;"></div>
<div style="left:0px;top:271px;width:13.5px;height:16px;background:#e4ecf7;"></div>
<div style="left:0px;top:286px;width:13.5px;height:1px;background:#a3bbdf;"></div>
<div style="left:12.5px;top:271px;width:1px;height:16px;background:#c5d6ee;"></div>
<div style="left:13.5px;top:286px;width:564.5px;height:1px;background:rgba(120,120,100,0.10);"></div>
<span style="left:16px;top:273px;font-size:11.2px;line-height:11.2px;color:#000;transform:translate(0.89px,0.44px) rotate(.03deg) scaleX(0.9932);">Natrium</span>
<span style="left:186px;top:273px;font-size:11.2px;line-height:11.2px;color:#000;transform:translate(0.82px,0.44px) rotate(.03deg) scaleX(0.9549);">NA</span>
<span style="left:243px;top:273px;font-size:11.2px;line-height:11.2px;color:#000;transform:translate(0.95px,0.44px) rotate(.03deg) scaleX(1.0059);">mmol/l</span>
<span style="left:307px;top:273px;font-size:11.2px;line-height:11.2px;color:#000;transform:translate(0.82px,0.44px) rotate(.03deg) scaleX(1.0319);">136 - 145</span>
<div style="left:13.5px;top:287px;width:406.9px;height:15px;background:#ffffe1;"></div>
<div style="left:420.4px;top:287px;width:157.6px;height:15px;background:#ffffe1;"></div>
<div style="left:0px;top:287px;width:13.5px;height:15px;background:#e4ecf7;"></div>
<div style="left:0px;top:301px;width:13.5px;height:1px;background:#a3bbdf;"></div>
<div style="left:12.5px;top:287px;width:1px;height:15px;background:#c5d6ee;"></div>
<div style="left:13.5px;top:301px;width:564.5px;height:1px;background:rgba(120,120,100,0.10);"></div>
<span style="left:16px;top:288px;font-size:11.2px;line-height:11.2px;color:#000;transform:translate(0.89px,0.54px) rotate(.03deg) scaleX(0.9926);">Kalium</span>
<span style="left:186px;top:288px;font-size:11.2px;line-height:11.2px;color:#000;transform:translate(0.82px,0.54px) rotate(.03deg) scaleX(0.9549);">K</span>
<span style="left:243px;top:288px;font-size:11.2px;line-height:11.2px;color:#000;transform:translate(0.95px,0.54px) rotate(.03deg) scaleX(1.0059);">mmol/l</span>
<span style="left:308px;top:288px;font-size:11.2px;line-height:11.2px;color:#000;transform:translate(0.26px,0.54px) rotate(.03deg) scaleX(1.0319);">3,6 - 5,5</span>
<div style="left:13.5px;top:302px;width:406.9px;height:15px;background:#f3f3df;"></div>
<div style="left:420.4px;top:302px;width:157.6px;height:15px;background:#ffffff;"></div>
<div style="left:0px;top:302px;width:13.5px;height:15px;background:#e4ecf7;"></div>
<div style="left:0px;top:316px;width:13.5px;height:1px;background:#a3bbdf;"></div>
<div style="left:12.5px;top:302px;width:1px;height:15px;background:#c5d6ee;"></div>
<div style="left:13.5px;top:316px;width:564.5px;height:1px;background:rgba(120,120,100,0.10);"></div>
<span style="left:17px;top:303px;font-size:11.2px;line-height:11.2px;color:#000;transform:translate(0.23px,0.64px) rotate(.03deg) scaleX(0.9935);">Calcium</span>
<span style="left:187px;top:303px;font-size:11.2px;line-height:11.2px;color:#000;transform:translate(0.16px,0.64px) rotate(.03deg) scaleX(0.9549);">CA</span>
<span style="left:243px;top:303px;font-size:11.2px;line-height:11.2px;color:#000;transform:translate(0.95px,0.64px) rotate(.03deg) scaleX(1.0059);">mmol/l</span>
<span style="left:308px;top:303px;font-size:11.2px;line-height:11.2px;color:#000;transform:translate(0.12px,0.64px) rotate(.03deg) scaleX(1.0319);">2,10 - 2,70</span>
<div style="left:13.5px;top:317px;width:406.9px;height:15px;background:#ffffe1;"></div>
<div style="left:420.4px;top:317px;width:157.6px;height:15px;background:#ffffe1;"></div>
<div style="left:0px;top:317px;width:13.5px;height:15px;background:#e4ecf7;"></div>
<div style="left:0px;top:331px;width:13.5px;height:1px;background:#a3bbdf;"></div>
<div style="left:12.5px;top:317px;width:1px;height:15px;background:#c5d6ee;"></div>
<div style="left:13.5px;top:331px;width:564.5px;height:1px;background:rgba(120,120,100,0.10);"></div>
<span style="left:17px;top:318px;font-size:11.2px;line-height:11.2px;color:#000;transform:translate(0.23px,0.74px) rotate(.03deg) scaleX(0.9963);">Cholesterin</span>
<span style="left:187px;top:318px;font-size:11.2px;line-height:11.2px;color:#000;transform:translate(0.16px,0.74px) rotate(.03deg) scaleX(0.9549);">CHOL</span>
<span style="left:243px;top:318px;font-size:11.2px;line-height:11.2px;color:#000;transform:translate(0.95px,0.74px) rotate(.03deg) scaleX(1.0064);">mg/dl</span>
<span style="left:308px;top:318px;font-size:11.2px;line-height:11.2px;color:#000;transform:translate(0.13px,0.74px) rotate(.03deg) scaleX(1.0319);">&lt; 200</span>
<span style="left:533px;top:318px;font-size:11.2px;line-height:11.2px;color:#000;transform:translate(0.62px,0.74px) rotate(.03deg) scaleX(1.0319);">273</span>
<div style="left:13.5px;top:332px;width:406.9px;height:15px;background:#f3f3df;"></div>
<div style="left:420.4px;top:332px;width:157.6px;height:15px;background:#ffffff;"></div>
<div style="left:0px;top:332px;width:13.5px;height:15px;background:#e4ecf7;"></div>
<div style="left:0px;top:346px;width:13.5px;height:1px;background:#a3bbdf;"></div>
<div style="left:12.5px;top:332px;width:1px;height:15px;background:#c5d6ee;"></div>
<div style="left:13.5px;top:346px;width:564.5px;height:1px;background:rgba(120,120,100,0.10);"></div>
<span style="left:16px;top:333px;font-size:11.2px;line-height:11.2px;color:#000;transform:translate(0.89px,0.84px) rotate(.03deg) scaleX(0.9863);">HDL Cholesterin</span>
<span style="left:186px;top:333px;font-size:11.2px;line-height:11.2px;color:#000;transform:translate(0.82px,0.84px) rotate(.03deg) scaleX(0.9549);">HDLC</span>
<span style="left:243px;top:333px;font-size:11.2px;line-height:11.2px;color:#000;transform:translate(0.95px,0.84px) rotate(.03deg) scaleX(1.0064);">mg/dl</span>
<span style="left:308px;top:333px;font-size:11.2px;line-height:11.2px;color:#000;transform:translate(0.13px,0.84px) rotate(.03deg) scaleX(1.0319);">&gt;35</span>
<div style="left:182.8px;top:15px;width:1px;height:329px;background:rgba(120,120,100,0.10);"></div>
<div style="left:240.3px;top:15px;width:1px;height:329px;background:rgba(120,120,100,0.10);"></div>
<div style="left:304px;top:15px;width:1px;height:329px;background:rgba(120,120,100,0.10);"></div>
<div style="left:419.9px;top:15px;width:1px;height:329px;background:rgba(120,120,100,0.10);"></div>
<div style="left:488.8px;top:15px;width:1px;height:329px;background:rgba(120,120,100,0.10);"></div>
<div style="left:557.2px;top:15px;width:1px;height:329px;background:rgba(120,120,100,0.10);"></div>
<span style="left:436px;top:2px;font-size:11px;line-height:11px;color:#111;transform:translate(0.81px,0.14px) rotate(.03deg) scaleX(1.0853);">&lt;</span>
<span style="left:505px;top:2px;font-size:11px;line-height:11px;color:#111;transform:translate(0.11px,0.14px) rotate(.03deg) scaleX(1.0853);">&lt;</span>
<span style="left:572px;top:2px;font-size:11px;line-height:11px;color:#111;transform:translate(0.71px,0.14px) rotate(.03deg) scaleX(1.0853);">&lt;</span>
<span style="left:464px;top:2px;font-size:11px;line-height:11px;color:#111;transform:translate(0.81px,0.14px) rotate(.03deg) scaleX(1.0853);">&gt;</span>
<span style="left:533px;top:2px;font-size:11px;line-height:11px;color:#111;transform:translate(0.41px,0.14px) rotate(.03deg) scaleX(1.0853);">&gt;</span>
</div>
<div style="left:587px;top:231px;width:13px;height:357px;background:#f0f0f0;"></div>
<div style="left:9px;top:575px;width:578px;height:13px;background:#f0f0f0;"></div>
<div style="left:593px;top:244.5px;width:2px;height:112px;background:#8a8a8a;border-radius:1px;"></div>
<div style="left:22.5px;top:580.5px;width:42.5px;height:1.6px;background:#8a8a8a;border-radius:1px;"></div>
<svg style="left:8px;top:595px" width="14" height="31" viewBox="8 595 14 31"><circle cx="15" cy="602" r="4.3" fill="#fff" stroke="#0a5fbd" stroke-width="3.2"/><circle cx="15" cy="618.8" r="5.3" fill="#fafafa" stroke="#8a8a8a" stroke-width="1"/></svg>
<span style="left:32px;top:597px;font-size:10px;line-height:10px;color:#000;transform:translate(0.38px,0.99px) rotate(.03deg) scaleX(0.9830);">Auswahl Zeilen</span>
<span style="left:29px;top:614px;font-size:10px;line-height:10px;color:#000;transform:translate(0.28px,0.79px) rotate(.03deg) scaleX(0.9780);">Auswahl Spalten</span>
<div style="left:120.6px;top:592.5px;width:140.4px;height:18.9px;background:#fbfbfb;border:1px solid #d2d2d2;border-bottom-color:#c2c2c2;box-sizing:border-box;border-radius:3px;"></div>
<div style="left:123.2px;top:595.6px;width:135.2px;height:13.2px;background:#b0c4de;"></div>
<span style="left:141px;top:598px;font-size:10.2px;line-height:10.2px;color:#000;transform:translate(0.28px,0.00px) rotate(.03deg) scaleX(0.9632);">Auswahl Zeile löschen</span>
<div style="left:269.3px;top:595.6px;width:176px;height:13.2px;background:#b0c4de;"></div>
<div style="left:266.7px;top:592.5px;width:180.5px;height:18.9px;background:transparent;border:1px solid #ececec;box-sizing:border-box;border-radius:3px;"></div>
<span style="left:279px;top:598px;font-size:10.2px;line-height:10.2px;color:#55627c;transform:translate(0.88px,0.00px) rotate(.03deg) scaleX(0.9757);">Nur ausgewählte Spalten anzeigen</span>
<div style="left:452.4px;top:593.5px;width:91.9px;height:37.5px;background:#fbfbfb;border:1px solid #d2d2d2;border-bottom-color:#c2c2c2;box-sizing:border-box;border-radius:3px;"></div>
<div style="left:455px;top:596px;width:87.3px;height:32.7px;background:#4682b4;"></div>
<span style="left:465px;top:603px;font-size:10.3px;line-height:10.3px;color:#fff;transform:translate(0.88px,0.20px) rotate(.03deg) scaleX(0.9599);">Abweichungen</span>
<span style="left:477px;top:615px;font-size:10.3px;line-height:10.3px;color:#fff;transform:translate(0.57px,0.80px) rotate(.03deg) scaleX(0.9877);">anzeigen</span>
<div style="left:548px;top:596.8px;width:49.2px;height:13.7px;background:#ff0000;"></div>
<span style="left:550px;top:599px;font-size:9.8px;line-height:9.8px;color:#fff;transform:translate(0.29px,0.20px) rotate(.03deg) scaleX(0.9982);">Zu hoch</span>
<div style="left:548px;top:612.4px;width:49.2px;height:13.4px;background:#4169e1;"></div>
<span style="left:550px;top:614px;font-size:9.8px;line-height:9.8px;color:#fff;transform:translate(0.28px,0.60px) rotate(.03deg) scaleX(1.0179);">Zu niedrig</span>
<div style="left:603.5px;top:592px;width:315.5px;height:18.2px;background:#fbfbfb;border:1px solid #d2d2d2;border-bottom-color:#c2c2c2;box-sizing:border-box;border-radius:3px;"></div>
<div style="left:606.4px;top:594.5px;width:310.8px;height:13.5px;background:#b0c4de;"></div>
<span style="left:717px;top:597px;font-size:10.3px;line-height:10.3px;color:#000;transform:translate(0.17px,0.10px) rotate(.03deg) scaleX(0.9839);">Diagramm Drucken</span>
<svg style="left:904.5px;top:595px" width="14" height="13" viewBox="0 0 14 13"><path d="M3.200 5V1.200c0-.4.300-.7.700-.7h5.400l1.500 1.500V5" fill="#fff" stroke="#7c8aa0" stroke-width="0.900"/><rect x="0.600" y="4.800" width="12.800" height="5.600" rx="1.400" fill="#dfe5ee" stroke="#7c8aa0" stroke-width="0.900"/><rect x="3" y="8" width="8" height="4.300" fill="#fff" stroke="#7c8aa0" stroke-width="0.900"/><path d="M4.300 9.600h5.400M4.300 10.900h5.400" stroke="#a5b0c2" stroke-width="0.600"/><circle cx="11.400" cy="6.500" r="0.600" fill="#5d88d8"/></svg>
<div style="left:603.5px;top:612px;width:315.5px;height:18.2px;background:#fbfbfb;border:1px solid #d2d2d2;border-bottom-color:#c2c2c2;box-sizing:border-box;border-radius:3px;"></div>
<div style="left:606.4px;top:614.5px;width:310.8px;height:13.5px;background:#b0c4de;"></div>
<span style="left:689px;top:617px;font-size:10.3px;line-height:10.3px;color:#000;transform:translate(0.18px,0.10px) rotate(.03deg) scaleX(0.9701);">Erweitertes Diagramm anzeigen</span>
<span style="left:640px;top:573px;font-size:11.2px;line-height:11.2px;color:#a3262c;transform:translate(0.18px,0.24px) rotate(.03deg) scaleX(0.9297);">Ansicht im Diagramm  maximal die letzten 10  Werte</span>
<span style="left:659px;top:247px;font-size:12.3px;line-height:12.3px;color:#000;transform:translate(0.59px,0.46px) rotate(.03deg) scaleX(1.0027);-webkit-text-stroke:0;">Hämoglobin</span>
<span style="left:735px;top:247px;font-size:12.3px;line-height:12.3px;color:#000;transform:translate(0.50px,0.46px) rotate(.03deg) scaleX(0.9883);-webkit-text-stroke:0;">Durchschnitt: 10,04 g/dl</span>
<span style="left:663px;top:537px;font-size:10.5px;line-height:10.5px;color:#000;transform:translate(0.20px,0.84px) rotate(.03deg) scaleX(0.9320);-webkit-text-stroke:0.05px;">Laborwert Hämoglobin Normwert: 13,7 - 17,5</span>
<svg style="left:612px;top:270px" width="300" height="260" viewBox="612 270 300 260">
<rect x="619.5" y="275.9" width="285.6" height="246.3" rx="9" fill="#fff" stroke="#b4b4b4" stroke-width="1"/>
<rect x="658.0" y="297.0" width="194.8" height="52.7" fill="#ecfbea" stroke="#cfd8cf" stroke-width="1"/>
<path d="M658.0 457.5H852.8" stroke="#cfcfcf" stroke-width="1" stroke-dasharray="2.2 1.6" fill="none"/>
<path d="M658.0 434.6H852.8" stroke="#cfcfcf" stroke-width="1" stroke-dasharray="2.2 1.6" fill="none"/>
<path d="M658.0 411.7H852.8" stroke="#cfcfcf" stroke-width="1" stroke-dasharray="2.2 1.6" fill="none"/>
<path d="M658.0 388.7H852.8" stroke="#cfcfcf" stroke-width="1" stroke-dasharray="2.2 1.6" fill="none"/>
<path d="M658.0 365.8H852.8" stroke="#cfcfcf" stroke-width="1" stroke-dasharray="2.2 1.6" fill="none"/>
<path d="M658.0 342.9H852.8" stroke="#cfcfcf" stroke-width="1" stroke-dasharray="2.2 1.6" fill="none"/>
<path d="M658.0 320.0H852.8" stroke="#cfcfcf" stroke-width="1" stroke-dasharray="2.2 1.6" fill="none"/>
<path d="M658.0 297.0H852.8" stroke="#cfcfcf" stroke-width="1" stroke-dasharray="2.2 1.6" fill="none"/>
<path d="M658.0 296.5V465.1H853.4" stroke="#4a4a4a" stroke-width="1.6" fill="none"/>
<path d="M652.7 457.5H658.0" stroke="#4a4a4a" stroke-width="1.2"/>
<path d="M655.0 446.1H658.0" stroke="#4a4a4a" stroke-width="1.1"/>
<text x="646.3" y="460.9" font-size="9.8" fill="#4f4a48" textLength="4.3" lengthAdjust="spacingAndGlyphs">9</text>
<path d="M652.7 434.6H658.0" stroke="#4a4a4a" stroke-width="1.2"/>
<path d="M655.0 423.1H658.0" stroke="#4a4a4a" stroke-width="1.1"/>
<text x="642.3" y="438.0" font-size="9.8" fill="#4f4a48" textLength="8.3" lengthAdjust="spacingAndGlyphs">10</text>
<path d="M652.7 411.7H658.0" stroke="#4a4a4a" stroke-width="1.2"/>
<path d="M655.0 400.2H658.0" stroke="#4a4a4a" stroke-width="1.1"/>
<text x="642.3" y="415.1" font-size="9.8" fill="#4f4a48" textLength="8.3" lengthAdjust="spacingAndGlyphs">11</text>
<path d="M652.7 388.7H658.0" stroke="#4a4a4a" stroke-width="1.2"/>
<path d="M655.0 377.3H658.0" stroke="#4a4a4a" stroke-width="1.1"/>
<text x="642.3" y="392.1" font-size="9.8" fill="#4f4a48" textLength="8.3" lengthAdjust="spacingAndGlyphs">12</text>
<path d="M652.7 365.8H658.0" stroke="#4a4a4a" stroke-width="1.2"/>
<path d="M655.0 354.3H658.0" stroke="#4a4a4a" stroke-width="1.1"/>
<text x="642.3" y="369.2" font-size="9.8" fill="#4f4a48" textLength="8.3" lengthAdjust="spacingAndGlyphs">13</text>
<path d="M652.7 342.9H658.0" stroke="#4a4a4a" stroke-width="1.2"/>
<path d="M655.0 331.4H658.0" stroke="#4a4a4a" stroke-width="1.1"/>
<text x="642.3" y="346.3" font-size="9.8" fill="#4f4a48" textLength="8.3" lengthAdjust="spacingAndGlyphs">14</text>
<path d="M652.7 320.0H658.0" stroke="#4a4a4a" stroke-width="1.2"/>
<path d="M655.0 308.5H658.0" stroke="#4a4a4a" stroke-width="1.1"/>
<text x="642.3" y="323.4" font-size="9.8" fill="#4f4a48" textLength="8.3" lengthAdjust="spacingAndGlyphs">15</text>
<path d="M652.7 297.0H658.0" stroke="#4a4a4a" stroke-width="1.2"/>
<text x="642.3" y="300.4" font-size="9.8" fill="#4f4a48" textLength="8.3" lengthAdjust="spacingAndGlyphs">16</text>
<path d="M658.9 465.1V469.70000000000005" stroke="#4a4a4a" stroke-width="1.2"/>
<path d="M669.7 465.1V468.1" stroke="#4a4a4a" stroke-width="1.1"/>
<path d="M680.4 465.1V469.70000000000005" stroke="#4a4a4a" stroke-width="1.2"/>
<path d="M691.2 465.1V468.1" stroke="#4a4a4a" stroke-width="1.1"/>
<path d="M702.0 465.1V469.70000000000005" stroke="#4a4a4a" stroke-width="1.2"/>
<path d="M712.8 465.1V468.1" stroke="#4a4a4a" stroke-width="1.1"/>
<path d="M723.5 465.1V469.70000000000005" stroke="#4a4a4a" stroke-width="1.2"/>
<path d="M734.3 465.1V468.1" stroke="#4a4a4a" stroke-width="1.1"/>
<path d="M745.1 465.1V469.70000000000005" stroke="#4a4a4a" stroke-width="1.2"/>
<path d="M755.9 465.1V468.1" stroke="#4a4a4a" stroke-width="1.1"/>
<path d="M766.6 465.1V469.70000000000005" stroke="#4a4a4a" stroke-width="1.2"/>
<path d="M777.4 465.1V468.1" stroke="#4a4a4a" stroke-width="1.1"/>
<path d="M788.2 465.1V469.70000000000005" stroke="#4a4a4a" stroke-width="1.2"/>
<path d="M799.0 465.1V468.1" stroke="#4a4a4a" stroke-width="1.1"/>
<path d="M809.8 465.1V469.70000000000005" stroke="#4a4a4a" stroke-width="1.2"/>
<path d="M820.5 465.1V468.1" stroke="#4a4a4a" stroke-width="1.1"/>
<path d="M831.3 465.1V469.70000000000005" stroke="#4a4a4a" stroke-width="1.2"/>
<path d="M842.1 465.1V468.1" stroke="#4a4a4a" stroke-width="1.1"/>
<path d="M852.9 465.1V469.70000000000005" stroke="#4a4a4a" stroke-width="1.2"/>
<polyline points="658.9,411.7 680.4,434.6 702.0,423.1 723.5,434.6 745.1,432.3 766.6,446.1 788.2,446.1 809.8,446.1 831.3,432.3 852.9,430.0" fill="none" stroke="#8de88d" stroke-width="1.4" stroke-linejoin="round"/>
<path d="M658.9 407.5L663.1 411.7L658.9 415.9L654.7 411.7Z" fill="#86e686" stroke="#279427" stroke-width="0.9"/>
<path d="M680.4 430.4L684.6 434.6L680.4 438.8L676.2 434.6Z" fill="#86e686" stroke="#279427" stroke-width="0.9"/>
<path d="M702.0 418.9L706.2 423.1L702.0 427.3L697.8 423.1Z" fill="#86e686" stroke="#279427" stroke-width="0.9"/>
<path d="M723.5 430.4L727.8 434.6L723.5 438.8L719.3 434.6Z" fill="#86e686" stroke="#279427" stroke-width="0.9"/>
<path d="M745.1 428.1L749.3 432.3L745.1 436.5L740.9 432.3Z" fill="#86e686" stroke="#279427" stroke-width="0.9"/>
<path d="M766.6 441.9L770.9 446.1L766.6 450.3L762.4 446.1Z" fill="#86e686" stroke="#279427" stroke-width="0.9"/>
<path d="M788.2 441.9L792.4 446.1L788.2 450.3L784.0 446.1Z" fill="#86e686" stroke="#279427" stroke-width="0.9"/>
<path d="M809.8 441.9L814.0 446.1L809.8 450.3L805.5 446.1Z" fill="#86e686" stroke="#279427" stroke-width="0.9"/>
<path d="M831.3 428.1L835.5 432.3L831.3 436.5L827.1 432.3Z" fill="#86e686" stroke="#279427" stroke-width="0.9"/>
<path d="M852.9 425.8L857.1 430.0L852.9 434.2L848.6 430.0Z" fill="#86e686" stroke="#279427" stroke-width="0.9"/>
<path d="M658.9 411.7l4.5 4.5" stroke="#222" stroke-width="0.9"/>
<path d="M680.4 433.6v4.6" stroke="#222" stroke-width="0.9"/>
<path d="M702.0 422.1v4.6" stroke="#222" stroke-width="0.9"/>
<path d="M723.5 433.6v4.6" stroke="#222" stroke-width="0.9"/>
<path d="M745.1 431.3v4.6" stroke="#222" stroke-width="0.9"/>
<path d="M766.6 445.1v4.6" stroke="#222" stroke-width="0.9"/>
<path d="M788.2 445.1v4.6" stroke="#222" stroke-width="0.9"/>
<path d="M809.8 445.1v4.6" stroke="#222" stroke-width="0.9"/>
<path d="M831.3 431.3v4.6" stroke="#222" stroke-width="0.9"/>
<path d="M852.9 430.0l-4 -3" stroke="#222" stroke-width="0.9"/>
<text x="664.9" y="422.6" font-size="8.2" fill="#1a1a1a" textLength="7.3" lengthAdjust="spacingAndGlyphs">11</text>
<text x="676.5" y="446.2" font-size="8.2" fill="#1a1a1a" textLength="7.3" lengthAdjust="spacingAndGlyphs">10</text>
<text x="694.6" y="434.2" font-size="8.2" fill="#1a1a1a" textLength="14" lengthAdjust="spacingAndGlyphs">10,5</text>
<text x="719.6" y="446.2" font-size="8.2" fill="#1a1a1a" textLength="7.3" lengthAdjust="spacingAndGlyphs">10</text>
<text x="737.7" y="443" font-size="8.2" fill="#1a1a1a" textLength="14" lengthAdjust="spacingAndGlyphs">10,1</text>
<text x="761.0" y="458.3" font-size="8.2" fill="#1a1a1a" textLength="10.6" lengthAdjust="spacingAndGlyphs">9,5</text>
<text x="782.5" y="458.3" font-size="8.2" fill="#1a1a1a" textLength="10.6" lengthAdjust="spacingAndGlyphs">9,5</text>
<text x="804.1" y="458.3" font-size="8.2" fill="#1a1a1a" textLength="10.6" lengthAdjust="spacingAndGlyphs">9,5</text>
<text x="823.9" y="443" font-size="8.2" fill="#1a1a1a" textLength="14" lengthAdjust="spacingAndGlyphs">10,1</text>
<text x="833.0" y="423.8" font-size="8.2" fill="#1a1a1a" textLength="14" lengthAdjust="spacingAndGlyphs">10,2</text>
<text transform="translate(657.3 478.5) rotate(43)" font-size="8.6" fill="#5c5c5c" textLength="36.8" lengthAdjust="spacingAndGlyphs">11.03.2025</text>
<text transform="translate(678.8 478.5) rotate(43)" font-size="8.6" fill="#5c5c5c" textLength="36.8" lengthAdjust="spacingAndGlyphs">29.04.2025</text>
<text transform="translate(700.4 478.5) rotate(43)" font-size="8.6" fill="#5c5c5c" textLength="36.8" lengthAdjust="spacingAndGlyphs">13.05.2025</text>
<text transform="translate(721.9 478.5) rotate(43)" font-size="8.6" fill="#5c5c5c" textLength="36.8" lengthAdjust="spacingAndGlyphs">26.06.2025</text>
<text transform="translate(743.5 478.5) rotate(43)" font-size="8.6" fill="#5c5c5c" textLength="36.8" lengthAdjust="spacingAndGlyphs">23.07.2025</text>
<text transform="translate(765.0 478.5) rotate(43)" font-size="8.6" fill="#5c5c5c" textLength="36.8" lengthAdjust="spacingAndGlyphs">22.08.2025</text>
<text transform="translate(786.6 478.5) rotate(43)" font-size="8.6" fill="#5c5c5c" textLength="36.8" lengthAdjust="spacingAndGlyphs">01.09.2025</text>
<text transform="translate(808.1 478.5) rotate(43)" font-size="8.6" fill="#5c5c5c" textLength="36.8" lengthAdjust="spacingAndGlyphs">09.09.2025</text>
<text transform="translate(829.7 478.5) rotate(43)" font-size="8.6" fill="#5c5c5c" textLength="36.8" lengthAdjust="spacingAndGlyphs">24.09.2025</text>
<text transform="translate(851.2 478.5) rotate(43)" font-size="8.6" fill="#5c5c5c" textLength="36.8" lengthAdjust="spacingAndGlyphs">07.10.2025</text>
</svg>
</body></html>
